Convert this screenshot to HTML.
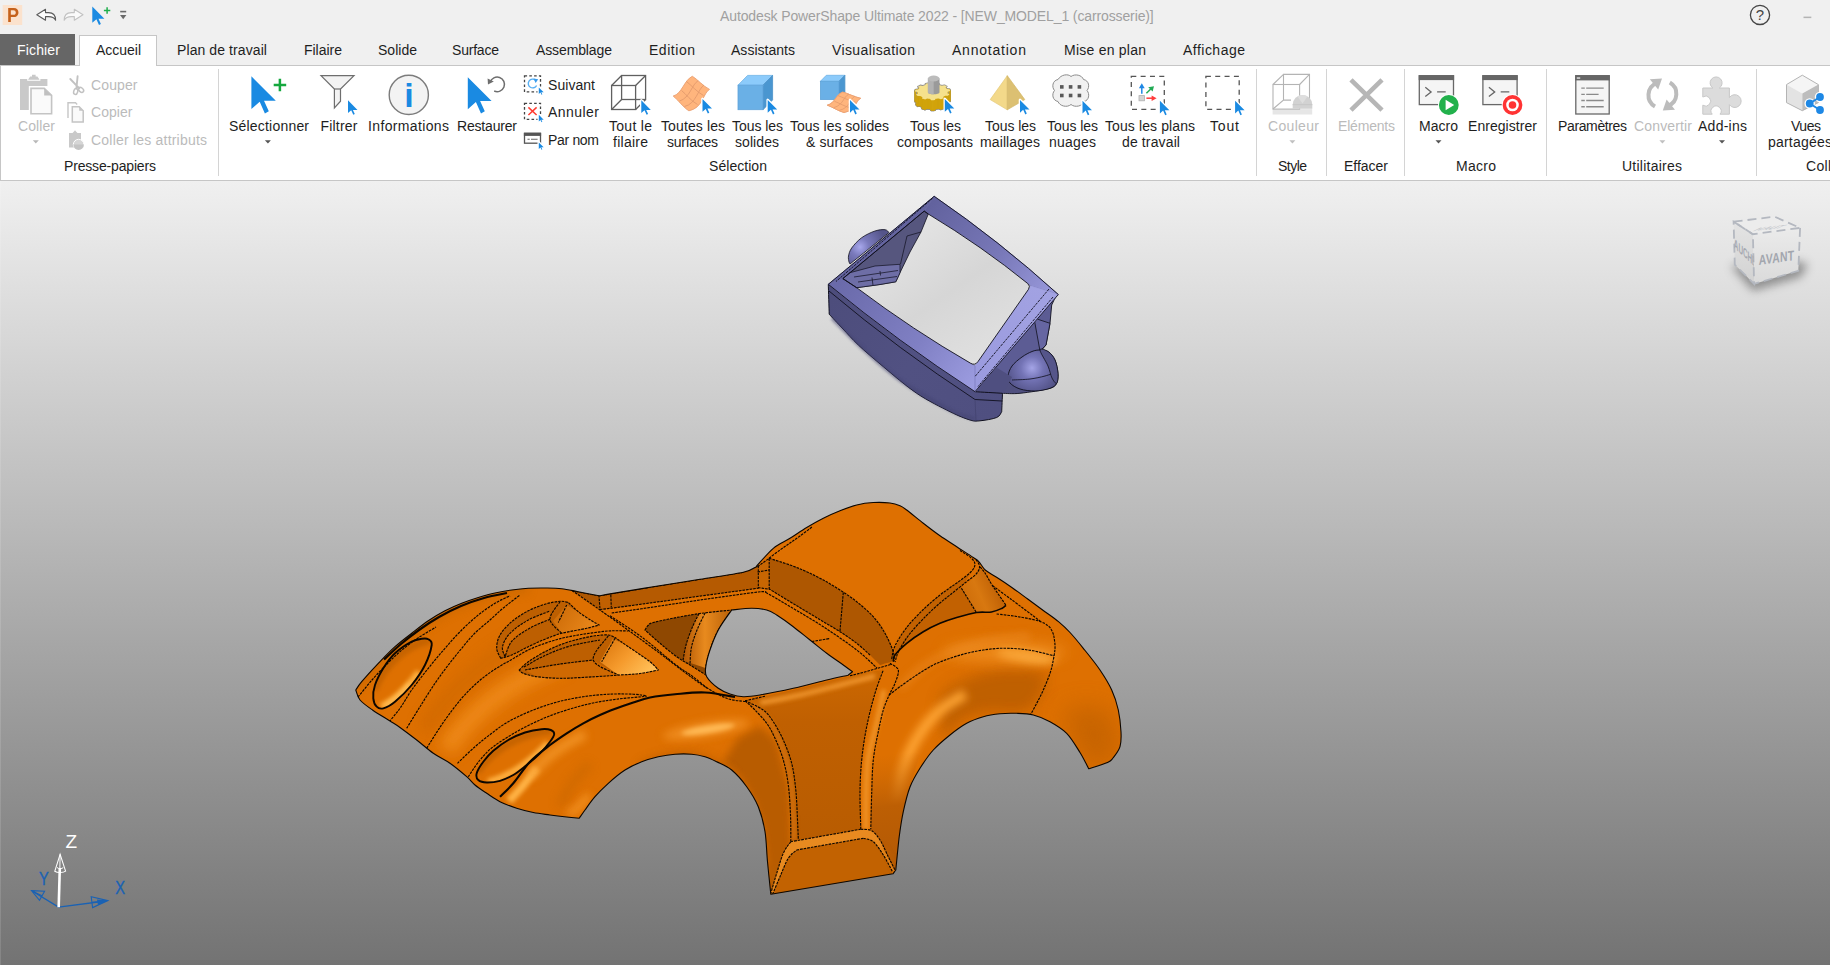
<!DOCTYPE html>
<html lang="fr"><head><meta charset="utf-8"><title>Autodesk PowerShape Ultimate 2022</title>
<style>
html,body{margin:0;padding:0;background:#f0f0f0;}
body{width:1830px;height:965px;overflow:hidden;font-family:"Liberation Sans",sans-serif;font-size:14px;}
#app{position:relative;width:1830px;height:965px;overflow:hidden;background:#f0f0f0;}
#ribbon{position:absolute;left:0;top:65px;width:1840px;height:116px;background:#fff;border:1px solid #c6c6c6;box-sizing:border-box;border-right:none;}
#tabfile{position:absolute;left:0;top:34px;width:75px;height:31px;background:#666;}
#tabhome{position:absolute;left:79px;top:35px;width:78px;height:31px;background:#fff;border:1px solid #c6c6c6;border-bottom:none;box-sizing:border-box;}
.sep{position:absolute;top:69px;width:1px;height:107px;background:#d4d4d4;}
.l{position:absolute;white-space:pre;line-height:16px;height:16px;}
.d{color:#1e1e1e;}
.g{color:#bbbbbb;}
.t{color:#a0a0a0;}
.w{color:#fff;}
#icons{position:absolute;left:0;top:0;}
#view{position:absolute;left:0;top:181px;}
#logo{position:absolute;left:5.6px;top:3.2px;width:14px;height:24px;line-height:24px;font-size:21px;font-weight:bold;color:#c5611b;text-align:center;transform:scaleX(0.86);transform-origin:50% 50%;z-index:3;}
#help{position:absolute;left:1752px;top:6px;width:16px;height:18px;line-height:18px;font-size:15px;color:#444;text-align:center;z-index:3;}
</style></head>
<body>
<div id="app">
<div id="ribbon"></div>
<div id="tabfile"></div>
<div id="tabhome"></div>
<div class="sep" style="left:218px"></div>
<div class="sep" style="left:1256px"></div>
<div class="sep" style="left:1326px"></div>
<div class="sep" style="left:1404px"></div>
<div class="sep" style="left:1546px"></div>
<div class="sep" style="left:1756px"></div>
<span id="logo">P</span>
<span id="help">?</span>
<div id="labels">
<span class="l t" style="left:720.0px;top:8.2px;letter-spacing:-0.12px">Autodesk PowerShape Ultimate 2022 - [NEW_MODEL_1 (carrosserie)]</span>
<span class="l w" style="left:17.0px;top:42.1px;letter-spacing:0.16px">Fichier</span>
<span class="l d" style="left:96.0px;top:42.1px;letter-spacing:-0.02px">Accueil</span>
<span class="l d" style="left:177.0px;top:42.1px;letter-spacing:0.09px">Plan de travail</span>
<span class="l d" style="left:304.0px;top:42.1px;letter-spacing:-0.02px">Filaire</span>
<span class="l d" style="left:378.0px;top:42.1px;letter-spacing:0.02px">Solide</span>
<span class="l d" style="left:452.0px;top:42.1px;letter-spacing:-0.21px">Surface</span>
<span class="l d" style="left:536.0px;top:42.1px;letter-spacing:-0.12px">Assemblage</span>
<span class="l d" style="left:649.0px;top:42.1px;letter-spacing:0.53px">Edition</span>
<span class="l d" style="left:731.0px;top:42.1px;letter-spacing:0.02px">Assistants</span>
<span class="l d" style="left:832.0px;top:42.1px;letter-spacing:0.39px">Visualisation</span>
<span class="l d" style="left:952.0px;top:42.1px;letter-spacing:0.78px">Annotation</span>
<span class="l d" style="left:1064.0px;top:42.1px;letter-spacing:0.24px">Mise en plan</span>
<span class="l d" style="left:1183.0px;top:42.1px;letter-spacing:0.48px">Affichage</span>
<span class="l g" style="left:18.0px;top:117.8px;letter-spacing:0.08px">Coller</span>
<span class="l g" style="left:91.0px;top:76.8px;letter-spacing:0.12px">Couper</span>
<span class="l g" style="left:91.0px;top:104.3px;letter-spacing:0.05px">Copier</span>
<span class="l g" style="left:91.0px;top:131.8px;letter-spacing:0.21px">Coller les attributs</span>
<span class="l d" style="left:64.0px;top:158.3px;letter-spacing:-0.17px">Presse-papiers</span>
<span class="l d" style="left:229.0px;top:117.8px;letter-spacing:0.20px">Sélectionner</span>
<span class="l d" style="left:320.5px;top:117.8px;letter-spacing:0.20px">Filtrer</span>
<span class="l d" style="left:368.0px;top:117.8px;letter-spacing:0.36px">Informations</span>
<span class="l d" style="left:457.0px;top:117.8px;letter-spacing:-0.18px">Restaurer</span>
<span class="l d" style="left:548.0px;top:76.8px;letter-spacing:0.05px">Suivant</span>
<span class="l d" style="left:548.0px;top:104.3px;letter-spacing:0.46px">Annuler</span>
<span class="l d" style="left:548.0px;top:131.8px;letter-spacing:-0.32px">Par nom</span>
<span class="l d" style="left:609.0px;top:117.8px;letter-spacing:0.29px">Tout le</span>
<span class="l d" style="left:613.0px;top:133.8px;letter-spacing:0.26px">filaire</span>
<span class="l d" style="left:661.0px;top:117.8px;letter-spacing:0.11px">Toutes les</span>
<span class="l d" style="left:667.0px;top:133.8px;letter-spacing:-0.27px">surfaces</span>
<span class="l d" style="left:732.0px;top:117.8px;letter-spacing:-0.05px">Tous les</span>
<span class="l d" style="left:735.0px;top:133.8px;letter-spacing:0.07px">solides</span>
<span class="l d" style="left:790.0px;top:117.8px;letter-spacing:0.01px">Tous les solides</span>
<span class="l d" style="left:806.0px;top:133.8px;letter-spacing:0.10px">&amp; surfaces</span>
<span class="l d" style="left:910.0px;top:117.8px;letter-spacing:-0.05px">Tous les</span>
<span class="l d" style="left:897.0px;top:133.8px;letter-spacing:0.06px">composants</span>
<span class="l d" style="left:985.0px;top:117.8px;letter-spacing:-0.05px">Tous les</span>
<span class="l d" style="left:980.0px;top:133.8px;letter-spacing:0.11px">maillages</span>
<span class="l d" style="left:1047.0px;top:117.8px;letter-spacing:-0.05px">Tous les</span>
<span class="l d" style="left:1049.0px;top:133.8px;letter-spacing:0.21px">nuages</span>
<span class="l d" style="left:1105.0px;top:117.8px;letter-spacing:0.10px">Tous les plans</span>
<span class="l d" style="left:1122.0px;top:133.8px;letter-spacing:0.13px">de travail</span>
<span class="l d" style="left:1210.0px;top:117.8px;letter-spacing:0.84px">Tout</span>
<span class="l d" style="left:709.0px;top:158.3px;letter-spacing:0.05px">Sélection</span>
<span class="l g" style="left:1268.0px;top:117.8px;letter-spacing:0.33px">Couleur</span>
<span class="l d" style="left:1278.0px;top:158.3px;letter-spacing:-0.53px">Style</span>
<span class="l g" style="left:1338.0px;top:117.8px;letter-spacing:-0.19px">Eléments</span>
<span class="l d" style="left:1344.0px;top:158.3px;letter-spacing:-0.02px">Effacer</span>
<span class="l d" style="left:1419.0px;top:117.8px;letter-spacing:0.02px">Macro</span>
<span class="l d" style="left:1468.0px;top:117.8px;letter-spacing:0.05px">Enregistrer</span>
<span class="l d" style="left:1456.0px;top:158.3px;letter-spacing:0.27px">Macro</span>
<span class="l d" style="left:1558.0px;top:117.8px;letter-spacing:-0.37px">Paramètres</span>
<span class="l g" style="left:1634.0px;top:117.8px;letter-spacing:0.15px">Convertir</span>
<span class="l d" style="left:1698.0px;top:117.8px;letter-spacing:0.26px">Add-ins</span>
<span class="l d" style="left:1622.0px;top:158.3px;letter-spacing:0.24px">Utilitaires</span>
<span class="l d" style="left:1791.0px;top:117.8px;letter-spacing:-0.46px">Vues</span>
<span class="l d" style="left:1768.0px;top:133.8px;letter-spacing:0.21px">partagées</span>
<span class="l d" style="left:1806.0px;top:158.3px;letter-spacing:0.29px">Coll</span>
</div>
<svg id="icons" width="1830" height="182" viewBox="0 0 1830 182">
<rect x="2.7" y="5" width="19.5" height="20" fill="#fbe2cd"/>
<path d="M36.8 14.8L45.5 9.3V12.6H48.5C53 12.6 55.6 15.2 55.6 20.2C54.3 17.6 52.2 16.6 48.5 16.6H45.5V20.2Z" fill="#fdfdfd" stroke="#5a5a5a" stroke-width="1.1" stroke-linejoin="round"/>
<path d="M83 14.8L74.3 9.3V12.6H71.3C66.8 12.6 64.2 15.2 64.2 20.2C65.5 17.6 67.6 16.6 71.3 16.6H74.3V20.2Z" fill="#fafafa" stroke="#c2c2c2" stroke-width="1.1" stroke-linejoin="round"/>
<path d="M92.3 6.6L92.3 22.8L96.4 19.2L99 25L100.9 23.9L98.5 18.7L104.4 18.7Z" fill="#1a8ae2"/>
<path d="M103.9 10.5H110.3M107.1 7.3V13.7" stroke="#1fae4b" stroke-width="1.5" fill="none"/>
<rect x="120.2" y="10.8" width="6" height="1.6" fill="#6a6a6a"/><path d="M120 15L126.4 15L123.2 19.2Z" fill="#6a6a6a"/>
<circle cx="1760" cy="14.9" r="9.6" fill="none" stroke="#444" stroke-width="1.3"/>
<rect x="1803.5" y="16.6" width="7.8" height="1.5" fill="#b4b4b4"/>
<path d="M20 79H27.2V80.8H40.4V79H47.4V86H28.8V110H20Z" fill="#c9c9c9"/>
<path d="M28 79.8L30.2 76.6H32V74.8H35.6V76.6H37.4L39.6 79.8Z" fill="#c9c9c9"/>
<path d="M31 88.4H44.2L51.6 95.4V113.7H31Z" fill="#fafafa" stroke="#c4c4c4" stroke-width="1.6"/>
<path d="M44.2 88.4L51.6 95.4H44.2Z" fill="#c0c0c0"/>
<path d="M32.8 140.2H38.8L35.8 143.6Z" fill="#b8b8b8"/>
<g fill="none" stroke="#c2c2c2" stroke-width="1.5" stroke-linecap="round"><path d="M77.6 76.3L76.4 88.5M70.3 79L79.3 88.3" stroke-width="1.9"/><ellipse cx="75.7" cy="91.5" rx="2" ry="3" transform="rotate(15 75.7 91.5)"/><ellipse cx="81" cy="89.8" rx="2" ry="3" transform="rotate(-50 81 89.8)"/></g>
<path d="M68 118V102.8H75.5L77.2 104.5" fill="none" stroke="#c6c6c6" stroke-width="1.4"/>
<path d="M72.3 106.8H79.2L83.2 110.8V122H72.3Z" fill="#fafafa" stroke="#c4c4c4" stroke-width="1.5"/><path d="M79.2 106.8L83.2 110.8H79.2Z" fill="#c4c4c4"/>
<path d="M69 133H72.5L74 131.5L75 130.2L76 131.5L77.5 133H81V147.4H69Z" fill="#c9c9c9"/>
<circle cx="78.6" cy="144.6" r="5.3" fill="#d6d6d6" stroke="#fff" stroke-width="1"/><path d="M73.3 144.6A5.3 5.3 0 0 0 83.9 144.6Z" fill="#c4c4c4"/>
<path d="M251.4 76.3L251.4 109.1L259.7 101.7L264.9 113.5L268.8 111.3L264 100.8L275.8 100.8Z" fill="#1a8ae2"/>
<path d="M273.7 84.9H286.2M279.9 78.7V91.2" stroke="#15a83e" stroke-width="2.5" fill="none"/>
<path d="M264.9 140.2H270.9L267.9 143.6Z" fill="#555"/>
<path d="M321 75.7H354L340.5 89V101.2L334.4 108V89Z" fill="#f3f3f3" stroke="#6e6e6e" stroke-width="1.2" stroke-linejoin="miter"/><path d="M334.4 89H340.5" stroke="#6e6e6e" stroke-width="1.2"/>
<path d="M348 100.3L348 113.1L351.2 110.2L353.3 114.8L354.8 114L352.9 109.9L357.5 109.9Z" fill="#1a8ae2"/>
<circle cx="408.8" cy="94.9" r="19.6" fill="#f3f3f3" stroke="#7c7c7c" stroke-width="1.4"/>
<text x="408.9" y="107.4" font-family="'Liberation Sans',sans-serif" font-size="34" font-weight="bold" text-anchor="middle" fill="#1a8ae2">i</text>
<path d="M467.8 77.2L467.8 109.2L475.9 102L481 113.5L484.8 111.3L480.1 101.1L491.6 101.1Z" fill="#1a8ae2"/>
<path d="M490.2 82.2A7.3 7.3 0 1 1 494.2 91" fill="none" stroke="#6e6e6e" stroke-width="1.5"/><path d="M487.6 78.5L493.8 81.6L488 84.6Z" fill="#6e6e6e"/>
<rect x="524.5" y="75.9" width="16" height="16" fill="none" stroke="#444" stroke-width="1.3" stroke-dasharray="2.6 2.2"/>
<path d="M535.6 80.2A4.4 4.4 0 1 0 536.6 85.5" fill="none" stroke="#58b0f4" stroke-width="1.4"/><path d="M533.5 78.6L538.2 79.2L535.6 83Z" fill="#3a9cec"/>
<path d="M538.8 87.4L538.8 94L540.5 92.5L541.5 94.8L542.3 94.4L541.3 92.3L543.7 92.3Z" fill="#fff" stroke="#fff" stroke-width="2.6" stroke-linejoin="round"/><path d="M538.8 87.4L538.8 94L540.5 92.5L541.5 94.8L542.3 94.4L541.3 92.3L543.7 92.3Z" fill="#1a8ae2"/>
<rect x="524.5" y="103.3" width="16" height="16" fill="none" stroke="#444" stroke-width="1.3" stroke-dasharray="2.6 2.2"/>
<path d="M528.4 107.4L536.6 115M536.6 107.4L528.4 115" stroke="#ff3b30" stroke-width="1.5"/>
<path d="M538.8 114.8L538.8 121.4L540.5 119.9L541.5 122.2L542.3 121.8L541.3 119.7L543.7 119.7Z" fill="#fff" stroke="#fff" stroke-width="2.6" stroke-linejoin="round"/><path d="M538.8 114.8L538.8 121.4L540.5 119.9L541.5 122.2L542.3 121.8L541.3 119.7L543.7 119.7Z" fill="#1a8ae2"/>
<rect x="524.5" y="133.4" width="16" height="9.8" fill="#fff" stroke="#555" stroke-width="1.3"/><rect x="523.9" y="132.7" width="17.2" height="3.2" fill="#555"/><path d="M527.5 139.3H529.7M531 139.3H537.6" stroke="#666" stroke-width="1.1"/>
<path d="M538.8 142.4L538.8 149L540.5 147.5L541.5 149.8L542.3 149.4L541.3 147.3L543.7 147.3Z" fill="#fff" stroke="#fff" stroke-width="2.6" stroke-linejoin="round"/><path d="M538.8 142.4L538.8 149L540.5 147.5L541.5 149.8L542.3 149.4L541.3 147.3L543.7 147.3Z" fill="#1a8ae2"/>
<g fill="none" stroke="#606060" stroke-width="1.3"><rect x="611.6" y="85.5" width="24" height="24"/><rect x="621.6" y="75.5" width="24" height="24"/><path d="M611.6 85.5L621.6 75.5M635.6 85.5L645.6 75.5M611.6 109.5L621.6 99.5M635.6 109.5L645.6 99.5"/></g>
<path d="M641.3 100.3L641.3 113.1L644.5 110.2L646.6 114.8L648.1 114L646.2 109.9L650.8 109.9Z" fill="#fff" stroke="#fff" stroke-width="2.6" stroke-linejoin="round"/><path d="M641.3 100.3L641.3 113.1L644.5 110.2L646.6 114.8L648.1 114L646.2 109.9L650.8 109.9Z" fill="#1a8ae2"/>
<path d="M692.4 76.3 C697 79 703 86 709.5 89.4 L709.5 89.4 C703 93 703 108 688.9 110.8 L688.9 110.8 C684 108 678 100 673.2 96 L673.2 96 C682 94 684 80 692.4 76.3 Z" fill="#ffb57d" stroke="#e9a074" stroke-width="0.9"/><path d="M686.5 81.5 C691 85 697 92 703.5 95.5 M681.5 90.5 C686 94 691 101 697.5 104.5 M698.2 80.7 C692 84 690 98 679.5 101 M704 85 C698 89 696 104 684.5 106.5" fill="none" stroke="#e39a6c" stroke-width="0.9"/>
<path d="M702.5 99L702.5 111.8L705.7 108.9L707.8 113.5L709.3 112.7L707.4 108.6L712 108.6Z" fill="#fff" stroke="#fff" stroke-width="2.6" stroke-linejoin="round"/><path d="M702.5 99L702.5 111.8L705.7 108.9L707.8 113.5L709.3 112.7L707.4 108.6L712 108.6Z" fill="#1a8ae2"/>
<path d="M738 85.2L747.6 75.4L772.6 75.4L763 85.2Z" fill="#8ccbfb" stroke="#6fb2e6" stroke-width="0.8"/><path d="M763 85.2L772.6 75.4L772.6 99.9L763 109.7Z" fill="#4a96d0" stroke="#4a90c8" stroke-width="0.8"/><rect x="738" y="85.2" width="25" height="24.5" fill="#6ab0e6" stroke="#5fa4da" stroke-width="0.8"/>
<path d="M767.7 99.9L767.7 112.7L770.9 109.8L773 114.4L774.5 113.6L772.6 109.5L777.2 109.5Z" fill="#fff" stroke="#fff" stroke-width="2.6" stroke-linejoin="round"/><path d="M767.7 99.9L767.7 112.7L770.9 109.8L773 114.4L774.5 113.6L772.6 109.5L777.2 109.5Z" fill="#1a8ae2"/>
<path d="M820.4 81.3L826.3 75.3L844.9 75.3L839 81.3Z" fill="#8ccbfb" stroke="#6fb2e6" stroke-width="0.8"/><path d="M839 81.3L844.9 75.3L844.9 93.5L839 99.5Z" fill="#4a96d0" stroke="#4a90c8" stroke-width="0.8"/><rect x="820.4" y="81.3" width="18.6" height="18.2" fill="#6ab0e6" stroke="#5fa4da" stroke-width="0.8"/>
<g transform="translate(824.5 93.5) scale(1 0.62) rotate(-8)"><g stroke="#fff" stroke-width="3"><path d="M18.4 0.3 C22.8 2.8 28.5 9.5 34.7 12.7 L34.7 12.7 C28.5 16.1 28.5 30.4 15.1 33.1 L15.1 33.1 C10.4 30.4 4.8 22.8 0.2 19 L0.2 19 C8.5 17.1 10.4 3.8 18.4 0.3 Z" fill="#ffb57d" stroke="#e9a074" stroke-width="0.9"/><path d="M12.8 5.2 C17.1 8.5 22.8 15.2 29 18.5 M8.1 13.8 C12.3 17.1 17.1 23.8 23.3 27.1 M23.9 4.5 C18.1 7.6 16.1 20.9 6.2 23.8 M29.4 8.5 C23.8 12.3 21.8 26.6 10.9 29" fill="none" stroke="#e39a6c" stroke-width="0.9"/></g><path d="M18.4 0.3 C22.8 2.8 28.5 9.5 34.7 12.7 L34.7 12.7 C28.5 16.1 28.5 30.4 15.1 33.1 L15.1 33.1 C10.4 30.4 4.8 22.8 0.2 19 L0.2 19 C8.5 17.1 10.4 3.8 18.4 0.3 Z" fill="#ffb57d" stroke="#e9a074" stroke-width="0.9"/><path d="M12.8 5.2 C17.1 8.5 22.8 15.2 29 18.5 M8.1 13.8 C12.3 17.1 17.1 23.8 23.3 27.1 M23.9 4.5 C18.1 7.6 16.1 20.9 6.2 23.8 M29.4 8.5 C23.8 12.3 21.8 26.6 10.9 29" fill="none" stroke="#e39a6c" stroke-width="0.9"/></g>
<path d="M850 99.9L850 112.7L853.2 109.8L855.3 114.4L856.8 113.6L854.9 109.5L859.5 109.5Z" fill="#fff" stroke="#fff" stroke-width="2.6" stroke-linejoin="round"/><path d="M850 99.9L850 112.7L853.2 109.8L855.3 114.4L856.8 113.6L854.9 109.5L859.5 109.5Z" fill="#1a8ae2"/>
<path d="M949.4 104.3L949 104.9L948.5 105.5L947.9 106L945.2 105.9L944.6 106.3L943.9 106.7L943.1 107.1L943.9 108.4L942.9 108.8L941.9 109.1L940.8 109.4L938.7 108.6L937.7 108.8L936.7 108.9L935.6 109L934.9 110.3L933.6 110.4L932.3 110.4L931.1 110.4L930.2 109.1L929.2 109L928.1 108.9L927.1 108.7L925.1 109.6L923.9 109.3L922.9 109L921.9 108.6L922.5 107.3L921.7 107L921 106.6L920.4 106.1L917.7 106.3L917 105.8L916.5 105.3L916 104.7L918 103.8L917.8 103.3L917.6 102.7L917.5 102.2L915 101.7L915.1 101.1L915.2 100.5L915.5 99.9L918.1 99.6L918.5 99.1L918.9 98.6L919.4 98.2L917.9 97L918.7 96.5L919.5 96.1L920.3 95.6L922.9 96.1L923.7 95.8L924.6 95.5L925.5 95.3L925.5 93.9L926.7 93.7L927.9 93.5L929.1 93.4L930.7 94.5L931.7 94.4L932.8 94.4L933.9 94.4L935.4 93.3L936.6 93.4L937.8 93.6L939 93.8L939.1 95.1L940 95.4L941 95.6L941.8 95.9L944.3 95.4L945.2 95.8L946.1 96.3L946.8 96.7L945.4 97.9L946 98.3L946.5 98.8L946.9 99.3L949.6 99.5L949.8 100.1L950.1 100.7L950.2 101.3L947.7 101.9L947.7 102.4L947.5 103L947.3 103.5Z" fill="#8e8e8e" stroke="#8e8e8e" stroke-width="1.6" stroke-linejoin="round"/>
<path d="M949.4 94.1L949 94.7L949 104.9L949.4 104.3ZM949 94.7L948.5 95.3L948.5 105.5L949 104.9ZM948.5 95.3L947.9 95.8L947.9 106L948.5 105.5ZM947.9 95.8L945.2 95.7L945.2 105.9L947.9 106ZM945.2 95.7L944.6 96.1L944.6 106.3L945.2 105.9ZM944.6 96.1L943.9 96.5L943.9 106.7L944.6 106.3ZM943.9 96.5L943.1 96.9L943.1 107.1L943.9 106.7ZM943.1 96.9L943.9 98.2L943.9 108.4L943.1 107.1ZM943.9 98.2L942.9 98.6L942.9 108.8L943.9 108.4ZM942.9 98.6L941.9 98.9L941.9 109.1L942.9 108.8ZM941.9 98.9L940.8 99.2L940.8 109.4L941.9 109.1ZM940.8 99.2L938.7 98.4L938.7 108.6L940.8 109.4ZM938.7 98.4L937.7 98.6L937.7 108.8L938.7 108.6ZM937.7 98.6L936.7 98.7L936.7 108.9L937.7 108.8ZM936.7 98.7L935.6 98.8L935.6 109L936.7 108.9ZM935.6 98.8L934.9 100.1L934.9 110.3L935.6 109ZM934.9 100.1L933.6 100.2L933.6 110.4L934.9 110.3ZM933.6 100.2L932.3 100.2L932.3 110.4L933.6 110.4ZM932.3 100.2L931.1 100.2L931.1 110.4L932.3 110.4ZM931.1 100.2L930.2 98.9L930.2 109.1L931.1 110.4ZM930.2 98.9L929.2 98.8L929.2 109L930.2 109.1ZM929.2 98.8L928.1 98.7L928.1 108.9L929.2 109ZM928.1 98.7L927.1 98.5L927.1 108.7L928.1 108.9ZM927.1 98.5L925.1 99.4L925.1 109.6L927.1 108.7ZM925.1 99.4L923.9 99.1L923.9 109.3L925.1 109.6ZM923.9 99.1L922.9 98.8L922.9 109L923.9 109.3ZM922.9 98.8L921.9 98.4L921.9 108.6L922.9 109ZM921.9 98.4L922.5 97.1L922.5 107.3L921.9 108.6ZM922.5 97.1L921.7 96.8L921.7 107L922.5 107.3ZM921.7 96.8L921 96.4L921 106.6L921.7 107ZM921 96.4L920.4 95.9L920.4 106.1L921 106.6ZM920.4 95.9L917.7 96.1L917.7 106.3L920.4 106.1ZM917.7 96.1L917 95.6L917 105.8L917.7 106.3ZM917 95.6L916.5 95.1L916.5 105.3L917 105.8ZM916.5 95.1L916 94.5L916 104.7L916.5 105.3ZM916 94.5L918 93.6L918 103.8L916 104.7ZM918 93.6L917.8 93.1L917.8 103.3L918 103.8ZM917.8 93.1L917.6 92.5L917.6 102.7L917.8 103.3ZM917.6 92.5L917.5 92L917.5 102.2L917.6 102.7ZM917.5 92L915 91.5L915 101.7L917.5 102.2ZM915 91.5L915.1 90.9L915.1 101.1L915 101.7ZM915.1 90.9L915.2 90.3L915.2 100.5L915.1 101.1ZM915.2 90.3L915.5 89.7L915.5 99.9L915.2 100.5ZM915.5 89.7L918.1 89.4L918.1 99.6L915.5 99.9ZM918.1 89.4L918.5 88.9L918.5 99.1L918.1 99.6ZM918.5 88.9L918.9 88.4L918.9 98.6L918.5 99.1ZM918.9 88.4L919.4 88L919.4 98.2L918.9 98.6ZM945.4 87.7L946 88.1L946 98.3L945.4 97.9ZM946 88.1L946.5 88.6L946.5 98.8L946 98.3ZM946.5 88.6L946.9 89.1L946.9 99.3L946.5 98.8ZM946.9 89.1L949.6 89.3L949.6 99.5L946.9 99.3ZM949.6 89.3L949.8 89.9L949.8 100.1L949.6 99.5ZM949.8 89.9L950.1 90.5L950.1 100.7L949.8 100.1ZM950.1 90.5L950.2 91.1L950.2 101.3L950.1 100.7ZM950.2 91.1L947.7 91.7L947.7 101.9L950.2 101.3ZM947.7 91.7L947.7 92.2L947.7 102.4L947.7 101.9ZM947.7 92.2L947.5 92.8L947.5 103L947.7 102.4ZM947.5 92.8L947.3 93.3L947.3 103.5L947.5 103ZM947.3 93.3L949.4 94.1L949.4 104.3L947.3 103.5Z" fill="#8e8e8e" stroke="#8e8e8e" stroke-width="1.6" stroke-linejoin="round"/>
<path d="M949.4 94.1L949 94.7L948.5 95.3L947.9 95.8L945.2 95.7L944.6 96.1L943.9 96.5L943.1 96.9L943.9 98.2L942.9 98.6L941.9 98.9L940.8 99.2L938.7 98.4L937.7 98.6L936.7 98.7L935.6 98.8L934.9 100.1L933.6 100.2L932.3 100.2L931.1 100.2L930.2 98.9L929.2 98.8L928.1 98.7L927.1 98.5L925.1 99.4L923.9 99.1L922.9 98.8L921.9 98.4L922.5 97.1L921.7 96.8L921 96.4L920.4 95.9L917.7 96.1L917 95.6L916.5 95.1L916 94.5L918 93.6L917.8 93.1L917.6 92.5L917.5 92L915 91.5L915.1 90.9L915.2 90.3L915.5 89.7L918.1 89.4L918.5 88.9L918.9 88.4L919.4 88L917.9 86.8L918.7 86.3L919.5 85.9L920.3 85.4L922.9 85.9L923.7 85.6L924.6 85.3L925.5 85.1L925.5 83.7L926.7 83.5L927.9 83.3L929.1 83.2L930.7 84.3L931.7 84.2L932.8 84.2L933.9 84.2L935.4 83.1L936.6 83.2L937.8 83.4L939 83.6L939.1 84.9L940 85.2L941 85.4L941.8 85.7L944.3 85.2L945.2 85.6L946.1 86.1L946.8 86.5L945.4 87.7L946 88.1L946.5 88.6L946.9 89.1L949.6 89.3L949.8 89.9L950.1 90.5L950.2 91.1L947.7 91.7L947.7 92.2L947.5 92.8L947.3 93.3Z" fill="#8e8e8e" stroke="#8e8e8e" stroke-width="1.6" stroke-linejoin="round"/>
<path d="M949.4 104.3L949 104.9L948.5 105.5L947.9 106L945.2 105.9L944.6 106.3L943.9 106.7L943.1 107.1L943.9 108.4L942.9 108.8L941.9 109.1L940.8 109.4L938.7 108.6L937.7 108.8L936.7 108.9L935.6 109L934.9 110.3L933.6 110.4L932.3 110.4L931.1 110.4L930.2 109.1L929.2 109L928.1 108.9L927.1 108.7L925.1 109.6L923.9 109.3L922.9 109L921.9 108.6L922.5 107.3L921.7 107L921 106.6L920.4 106.1L917.7 106.3L917 105.8L916.5 105.3L916 104.7L918 103.8L917.8 103.3L917.6 102.7L917.5 102.2L915 101.7L915.1 101.1L915.2 100.5L915.5 99.9L918.1 99.6L918.5 99.1L918.9 98.6L919.4 98.2L917.9 97L918.7 96.5L919.5 96.1L920.3 95.6L922.9 96.1L923.7 95.8L924.6 95.5L925.5 95.3L925.5 93.9L926.7 93.7L927.9 93.5L929.1 93.4L930.7 94.5L931.7 94.4L932.8 94.4L933.9 94.4L935.4 93.3L936.6 93.4L937.8 93.6L939 93.8L939.1 95.1L940 95.4L941 95.6L941.8 95.9L944.3 95.4L945.2 95.8L946.1 96.3L946.8 96.7L945.4 97.9L946 98.3L946.5 98.8L946.9 99.3L949.6 99.5L949.8 100.1L950.1 100.7L950.2 101.3L947.7 101.9L947.7 102.4L947.5 103L947.3 103.5Z" fill="#d2a50c"/>
<path d="M949.4 94.1L949 94.7L949 104.9L949.4 104.3ZM949 94.7L948.5 95.3L948.5 105.5L949 104.9ZM948.5 95.3L947.9 95.8L947.9 106L948.5 105.5ZM947.9 95.8L945.2 95.7L945.2 105.9L947.9 106ZM945.2 95.7L944.6 96.1L944.6 106.3L945.2 105.9ZM944.6 96.1L943.9 96.5L943.9 106.7L944.6 106.3ZM943.9 96.5L943.1 96.9L943.1 107.1L943.9 106.7ZM943.1 96.9L943.9 98.2L943.9 108.4L943.1 107.1ZM943.9 98.2L942.9 98.6L942.9 108.8L943.9 108.4ZM942.9 98.6L941.9 98.9L941.9 109.1L942.9 108.8ZM941.9 98.9L940.8 99.2L940.8 109.4L941.9 109.1ZM940.8 99.2L938.7 98.4L938.7 108.6L940.8 109.4ZM938.7 98.4L937.7 98.6L937.7 108.8L938.7 108.6ZM937.7 98.6L936.7 98.7L936.7 108.9L937.7 108.8ZM936.7 98.7L935.6 98.8L935.6 109L936.7 108.9ZM935.6 98.8L934.9 100.1L934.9 110.3L935.6 109ZM934.9 100.1L933.6 100.2L933.6 110.4L934.9 110.3ZM933.6 100.2L932.3 100.2L932.3 110.4L933.6 110.4ZM932.3 100.2L931.1 100.2L931.1 110.4L932.3 110.4ZM931.1 100.2L930.2 98.9L930.2 109.1L931.1 110.4ZM930.2 98.9L929.2 98.8L929.2 109L930.2 109.1ZM929.2 98.8L928.1 98.7L928.1 108.9L929.2 109ZM928.1 98.7L927.1 98.5L927.1 108.7L928.1 108.9ZM927.1 98.5L925.1 99.4L925.1 109.6L927.1 108.7ZM925.1 99.4L923.9 99.1L923.9 109.3L925.1 109.6ZM923.9 99.1L922.9 98.8L922.9 109L923.9 109.3ZM922.9 98.8L921.9 98.4L921.9 108.6L922.9 109ZM921.9 98.4L922.5 97.1L922.5 107.3L921.9 108.6ZM922.5 97.1L921.7 96.8L921.7 107L922.5 107.3ZM921.7 96.8L921 96.4L921 106.6L921.7 107ZM921 96.4L920.4 95.9L920.4 106.1L921 106.6ZM920.4 95.9L917.7 96.1L917.7 106.3L920.4 106.1ZM917.7 96.1L917 95.6L917 105.8L917.7 106.3ZM917 95.6L916.5 95.1L916.5 105.3L917 105.8ZM916.5 95.1L916 94.5L916 104.7L916.5 105.3ZM916 94.5L918 93.6L918 103.8L916 104.7ZM918 93.6L917.8 93.1L917.8 103.3L918 103.8ZM917.8 93.1L917.6 92.5L917.6 102.7L917.8 103.3ZM917.6 92.5L917.5 92L917.5 102.2L917.6 102.7ZM917.5 92L915 91.5L915 101.7L917.5 102.2ZM915 91.5L915.1 90.9L915.1 101.1L915 101.7ZM915.1 90.9L915.2 90.3L915.2 100.5L915.1 101.1ZM915.2 90.3L915.5 89.7L915.5 99.9L915.2 100.5ZM915.5 89.7L918.1 89.4L918.1 99.6L915.5 99.9ZM918.1 89.4L918.5 88.9L918.5 99.1L918.1 99.6ZM918.5 88.9L918.9 88.4L918.9 98.6L918.5 99.1ZM918.9 88.4L919.4 88L919.4 98.2L918.9 98.6ZM945.4 87.7L946 88.1L946 98.3L945.4 97.9ZM946 88.1L946.5 88.6L946.5 98.8L946 98.3ZM946.5 88.6L946.9 89.1L946.9 99.3L946.5 98.8ZM946.9 89.1L949.6 89.3L949.6 99.5L946.9 99.3ZM949.6 89.3L949.8 89.9L949.8 100.1L949.6 99.5ZM949.8 89.9L950.1 90.5L950.1 100.7L949.8 100.1ZM950.1 90.5L950.2 91.1L950.2 101.3L950.1 100.7ZM950.2 91.1L947.7 91.7L947.7 101.9L950.2 101.3ZM947.7 91.7L947.7 92.2L947.7 102.4L947.7 101.9ZM947.7 92.2L947.5 92.8L947.5 103L947.7 102.4ZM947.5 92.8L947.3 93.3L947.3 103.5L947.5 103ZM947.3 93.3L949.4 94.1L949.4 104.3L947.3 103.5Z" fill="#d2a50c" stroke="#d2a50c" stroke-width="0.4"/>
<path d="M949.4 94.1L949 94.7L948.5 95.3L947.9 95.8L945.2 95.7L944.6 96.1L943.9 96.5L943.1 96.9L943.9 98.2L942.9 98.6L941.9 98.9L940.8 99.2L938.7 98.4L937.7 98.6L936.7 98.7L935.6 98.8L934.9 100.1L933.6 100.2L932.3 100.2L931.1 100.2L930.2 98.9L929.2 98.8L928.1 98.7L927.1 98.5L925.1 99.4L923.9 99.1L922.9 98.8L921.9 98.4L922.5 97.1L921.7 96.8L921 96.4L920.4 95.9L917.7 96.1L917 95.6L916.5 95.1L916 94.5L918 93.6L917.8 93.1L917.6 92.5L917.5 92L915 91.5L915.1 90.9L915.2 90.3L915.5 89.7L918.1 89.4L918.5 88.9L918.9 88.4L919.4 88L917.9 86.8L918.7 86.3L919.5 85.9L920.3 85.4L922.9 85.9L923.7 85.6L924.6 85.3L925.5 85.1L925.5 83.7L926.7 83.5L927.9 83.3L929.1 83.2L930.7 84.3L931.7 84.2L932.8 84.2L933.9 84.2L935.4 83.1L936.6 83.2L937.8 83.4L939 83.6L939.1 84.9L940 85.2L941 85.4L941.8 85.7L944.3 85.2L945.2 85.6L946.1 86.1L946.8 86.5L945.4 87.7L946 88.1L946.5 88.6L946.9 89.1L949.6 89.3L949.8 89.9L950.1 90.5L950.2 91.1L947.7 91.7L947.7 92.2L947.5 92.8L947.3 93.3Z" fill="#f5e18c"/>
<path d="M927.9 78.5V92.3C927.9 95 939.5 95 939.5 92.3V78.5Z" fill="#9a9a9a"/><path d="M927.9 78.5V92.3C927.9 93.8 931 94.4 933.7 94.4V78.5Z" fill="#b2b2b2"/><ellipse cx="933.7" cy="78.5" rx="5.8" ry="2.9" fill="#bcbcbc"/>
<path d="M944.8 99L944.8 111.8L948 108.9L950.1 113.5L951.6 112.7L949.7 108.6L954.3 108.6Z" fill="#fff" stroke="#fff" stroke-width="2.6" stroke-linejoin="round"/><path d="M944.8 99L944.8 111.8L948 108.9L950.1 113.5L951.6 112.7L949.7 108.6L954.3 108.6Z" fill="#1a8ae2"/>
<path d="M1007.3 75.7L990.2 99.6L1007.3 109.8Z" fill="#f3d98a" stroke="#e4c878" stroke-width="0.7"/><path d="M1007.3 75.7L1024.8 99.6L1007.3 109.8Z" fill="#dcc072" stroke="#d4b868" stroke-width="0.7"/>
<path d="M1020 99.9L1020 112.7L1023.2 109.8L1025.3 114.4L1026.8 113.6L1024.9 109.5L1029.5 109.5Z" fill="#fff" stroke="#fff" stroke-width="2.6" stroke-linejoin="round"/><path d="M1020 99.9L1020 112.7L1023.2 109.8L1025.3 114.4L1026.8 113.6L1024.9 109.5L1029.5 109.5Z" fill="#1a8ae2"/>
<path d="M1058 79.5C1061 74.5 1068 73.5 1071 76.5C1075 73.5 1082 75 1083.5 79.5C1089 80.5 1090 87 1087 90.5C1090 94 1089 100.5 1084 101.5C1083 106 1075 108 1071 104.5C1067 108 1059.5 106 1058 101.5C1052.5 100.5 1051.5 94 1054.5 90.5C1051.5 87 1052.5 80.5 1058 79.5Z" fill="#f1f1f1" stroke="#8c8c8c" stroke-width="1"/>
<rect x="1060" y="85.1" width="3.6" height="3.6" fill="#595959"/>
<rect x="1060" y="93.7" width="3.6" height="3.6" fill="#595959"/>
<rect x="1068.8" y="85.1" width="3.6" height="3.6" fill="#595959"/>
<rect x="1068.8" y="93.7" width="3.6" height="3.6" fill="#595959"/>
<rect x="1077.6" y="85.1" width="3.6" height="3.6" fill="#595959"/>
<rect x="1077.6" y="93.7" width="3.6" height="3.6" fill="#595959"/>
<path d="M1082.5 100.7L1082.5 113.5L1085.7 110.6L1087.8 115.2L1089.3 114.4L1087.4 110.3L1092 110.3Z" fill="#fff" stroke="#fff" stroke-width="2.6" stroke-linejoin="round"/><path d="M1082.5 100.7L1082.5 113.5L1085.7 110.6L1087.8 115.2L1089.3 114.4L1087.4 110.3L1092 110.3Z" fill="#1a8ae2"/>
<rect x="1131.3" y="76.3" width="33" height="33" fill="none" stroke="#555" stroke-width="1.3" stroke-dasharray="5 4.33"/>
<rect x="1139" y="95.6" width="5.4" height="5.2" fill="#d4d4d4" stroke="#b0b0b0" stroke-width="0.8"/>
<path d="M1141.8 93.8V87" stroke="#1e88e5" stroke-width="1.5"/><path d="M1138.9 88.2L1141.8 83.3L1144.7 88.2Z" fill="#1e88e5"/>
<path d="M1146.4 93.2L1151 88.8" stroke="#22aa55" stroke-width="1.5"/><path d="M1148.2 87.2L1154 86.2L1152.6 91.6Z" fill="#22aa55"/>
<path d="M1146.4 98.2H1152.5" stroke="#ff3b3b" stroke-width="1.5"/><path d="M1151.6 95.4L1156.6 98.2L1151.6 101Z" fill="#ff3b3b"/>
<path d="M1159.9 100.7L1159.9 113.5L1163.1 110.6L1165.2 115.2L1166.7 114.4L1164.8 110.3L1169.4 110.3Z" fill="#fff" stroke="#fff" stroke-width="2.6" stroke-linejoin="round"/><path d="M1159.9 100.7L1159.9 113.5L1163.1 110.6L1165.2 115.2L1166.7 114.4L1164.8 110.3L1169.4 110.3Z" fill="#1a8ae2"/>
<rect x="1205.9" y="76.3" width="33.3" height="33" fill="none" stroke="#555" stroke-width="1.3" stroke-dasharray="5 4.33"/>
<path d="M1235.1 100.7L1235.1 113.5L1238.3 110.6L1240.4 115.2L1241.9 114.4L1240 110.3L1244.6 110.3Z" fill="#fff" stroke="#fff" stroke-width="2.6" stroke-linejoin="round"/><path d="M1235.1 100.7L1235.1 113.5L1238.3 110.6L1240.4 115.2L1241.9 114.4L1240 110.3L1244.6 110.3Z" fill="#1a8ae2"/>
<rect x="1272.6" y="109.1" width="39.6" height="5.4" fill="#e6e6e6"/>
<g fill="none" stroke="#b4b4b4" stroke-width="1.1"><rect x="1273" y="84.5" width="26.6" height="24.6"/><path d="M1283.5 100.1V74.4H1309.5V100.1M1273 84.5L1283.5 74.4M1299.6 84.5L1309.5 74.4M1273 109L1283.5 100.1H1291"/></g>
<path d="M1292.7 108.8V104.7A9.8 9.8 0 0 1 1312.3 104.7V108.8Z" fill="#d2d2d2"/><path d="M1297.5 96.5L1302.5 103.5L1307.5 96.5A9.8 9.8 0 0 0 1297.5 96.5Z" fill="#dedede"/><rect x="1292.7" y="104" width="19.6" height="1.2" fill="#c8c8c8"/>
<path d="M1289.4 140.2H1295.4L1292.4 143.6Z" fill="#c0c0c0"/>
<path d="M1351 79.8L1382 110.2M1382 79.8L1351 110.2" stroke="#b6b6b6" stroke-width="4.6"/>
<rect x="1419.3" y="75.8" width="34.2" height="28.8" fill="#f5f5f5" stroke="#686868" stroke-width="1.3"/><rect x="1418.7" y="75.1" width="35.4" height="5" fill="#666"/><path d="M1425.3 87.2L1431.1 91.9L1425.3 96.6M1437.1 91.9H1445.7" fill="none" stroke="#666" stroke-width="1.3"/>
<circle cx="1448.8" cy="105" r="10.8" fill="#fff"/><circle cx="1448.8" cy="105" r="9.9" fill="#22b14c"/><path d="M1445.6 99.8L1454.2 105L1445.6 110.2Z" fill="#fff"/>
<path d="M1435.5 140.2H1441.5L1438.5 143.6Z" fill="#555"/>
<rect x="1482.9" y="75.8" width="34.2" height="28.8" fill="#f5f5f5" stroke="#686868" stroke-width="1.3"/><rect x="1482.3" y="75.1" width="35.4" height="5" fill="#666"/><path d="M1488.9 87.2L1494.7 91.9L1488.9 96.6M1500.7 91.9H1509.3" fill="none" stroke="#666" stroke-width="1.3"/>
<circle cx="1512.5" cy="105" r="10.8" fill="#fff"/><circle cx="1512.5" cy="105" r="9.9" fill="#ff3333"/><circle cx="1512.5" cy="105" r="6.3" fill="#fff"/><circle cx="1512.5" cy="105" r="3.8" fill="#ff3333"/>
<rect x="1575.8" y="75.8" width="33.4" height="38.2" fill="#f5f5f5" stroke="#686868" stroke-width="1.3"/><rect x="1575.2" y="75.1" width="34.6" height="5.3" fill="#666"/><rect x="1576.8" y="77.3" width="3.4" height="1.5" fill="#ddd"/>
<path d="M1581.3 88.1H1584.8M1586.2 88.1H1603.7" stroke="#8a8a8a" stroke-width="1.4"/>
<path d="M1581.3 94.4H1584.8M1586.2 94.4H1598.6" stroke="#8a8a8a" stroke-width="1.4"/>
<path d="M1581.3 100.5H1584.8M1586.2 100.5H1603.7" stroke="#8a8a8a" stroke-width="1.4"/>
<path d="M1581.3 106.8H1584.8M1586.2 106.8H1603.7" stroke="#8a8a8a" stroke-width="1.4"/>
<g fill="none" stroke="#bcbcbc" stroke-width="4"><path d="M1655 106.5A13 13 0 0 1 1656.5 83.2"/><path d="M1669.8 82.5A13 13 0 0 1 1668.3 105.8"/></g>
<path d="M1649.8 79.2L1662 78.6L1658.2 89.5Z" fill="#bcbcbc"/><path d="M1675 109.8L1662.8 110.4L1666.6 99.5Z" fill="#bcbcbc"/>
<path d="M1659.4 140.2H1665.4L1662.4 143.6Z" fill="#c0c0c0"/>
<path d="M1702.8 88H1712.9A6 6 0 1 1 1719.3 88H1729.4V97.6A6.4 6.4 0 1 1 1729.4 104.6V114.2H1720A5 5 0 1 0 1712.2 114.2H1702.8V105.2A5 5 0 1 0 1702.8 97Z" fill="#dcdcdc" stroke="#c8c8c8" stroke-width="1"/>
<path d="M1719 140.2H1725L1722 143.6Z" fill="#555"/>
<path d="M1802.3 75.2L1818.4 84.6L1802.3 93.6L1786.5 84.6Z" fill="#f5f5f5"/><path d="M1786.5 84.6L1802.3 93.6V110.7L1786.5 102.6Z" fill="#e3e3e3"/><path d="M1818.4 84.6L1802.3 93.6V110.7L1818.4 102.6Z" fill="#bdbdbd"/><path d="M1802.3 75.2L1818.4 84.6V102.6L1802.3 110.7L1786.5 102.6V84.6Z" fill="none" stroke="#b4b4b4" stroke-width="1"/>
<g stroke="#fff" stroke-width="2.5" fill="#fff"><circle cx="1820" cy="97" r="4"/><circle cx="1809.7" cy="103.5" r="4"/><circle cx="1820" cy="110" r="4"/></g>
<path d="M1820 97L1809.7 103.5L1820 110" fill="none" stroke="#1e88e5" stroke-width="2"/><circle cx="1820" cy="97" r="3.9" fill="#1e88e5"/><circle cx="1809.7" cy="103.5" r="3.9" fill="#1e88e5"/><circle cx="1820" cy="110" r="3.9" fill="#1e88e5"/>
</svg>
<svg id="view" width="1830" height="784" viewBox="0 181 1830 784">
<defs>
<linearGradient id="bg" x1="0" y1="0" x2="0" y2="1">
<stop offset="0" stop-color="#f0f0f0"/>
<stop offset="1" stop-color="#737373"/>
</linearGradient>
</defs>
<rect x="0" y="181" width="1830" height="784" fill="url(#bg)"/>
<defs>
<clipPath id="carclip"><path clip-rule="evenodd" d="M355.8 690C356.8 688.6 357.9 686.2 361.7 681.7C365.4 677.2 372.8 669.1 378.3 663.3C383.9 657.5 389.4 651.7 395 646.7C400.6 641.7 406.1 637.6 411.7 633.3C417.2 629 422.8 624.5 428.3 620.8C433.9 617 439.4 613.7 445 610.8C450.6 607.9 456.1 605.5 461.7 603.3C467.2 601.1 472.8 599.2 478.3 597.5C483.9 595.8 489.4 594.2 495 593C500.6 591.8 506.1 590.8 511.7 590C517.2 589.2 522.8 588.6 528.3 588.3C533.8 588 539.4 587.9 545 588C550.6 588.1 556.2 588.1 561.7 588.7C567.2 589.3 572.8 590.7 578.3 591.7C583.8 592.8 591.4 594.3 595 595C598.6 595.7 599.2 595.7 600 595.8L600 595.8C602 595.4 603.4 595 611.7 593.6C620 592.2 635.3 589.7 650 587.3C664.7 584.9 684.5 581.8 700 579.3C715.5 576.8 733.8 574.3 743.3 572.2C752.8 570.1 754.5 567.5 756.7 566.5L756.7 566C759.5 563 767.8 552.9 773.3 548.3C778.8 543.7 784.4 541.8 790 538.3C795.6 534.8 801.2 530.8 806.7 527.5C812.2 524.2 817.8 521.1 823.3 518.3C828.8 515.5 834.4 513 840 510.8C845.6 508.6 851.2 506.4 856.7 505C862.2 503.6 867.8 502.8 873.3 502.5C878.8 502.2 885.5 502.4 890 503C894.5 503.6 897.2 504.6 900 505.8C902.8 507 902.8 507.1 906.7 510C910.6 512.9 917.8 519 923.3 523.3C928.8 527.6 934.4 531.9 940 535.8C945.6 539.7 951.2 543.1 956.7 546.7C962.2 550.3 969.6 555 973.3 557.5C977 560 977 559.7 979 561.8C981 563.9 982.3 567.4 985.2 570C988.1 572.6 992.1 574.3 996.6 577.3C1001.1 580.2 1007 584.1 1012.2 587.7C1017.4 591.3 1022.5 595.2 1027.7 599C1032.9 602.8 1038.1 606.7 1043.3 610.5C1048.5 614.3 1054.3 618.2 1058.8 621.9C1063.2 625.6 1065.9 628.1 1070 632.5C1074.1 636.9 1078.3 642 1083.3 648.3C1088.3 654.5 1095.3 663 1100 670C1104.7 677 1108.7 683.3 1111.7 690C1114.8 696.7 1116.8 703 1118.3 710C1119.8 717 1120.7 725.6 1121 731.7C1121.3 737.8 1121.3 742.3 1120 746.7C1118.7 751.1 1115.1 755.4 1113 758C1110.9 760.6 1111.5 760.7 1107.5 762.5C1103.5 764.3 1091.8 767.7 1088.7 768.7L1088.7 768.7C1087.2 766 1083.7 758.4 1080 752.5C1076.3 746.6 1071.7 738.4 1066.7 733.3C1061.7 728.2 1055.6 724.8 1050 721.7C1044.4 718.7 1038.8 716.4 1033.3 715C1027.8 713.6 1022.2 713.5 1016.7 713.3C1011.2 713.1 1005.6 713.1 1000 713.7C994.4 714.3 988.8 715.1 983.3 716.7C977.8 718.3 972.2 720.2 966.7 723.3C961.2 726.3 955.6 730.5 950 735C944.4 739.5 938.3 744.5 933.3 750C928.3 755.5 923.9 762.1 920 768.3C916.1 774.5 912.8 779.8 910 787C907.2 794.2 905.1 803.4 903.3 811.7C901.5 820 900.5 827 899.2 836.7C898 846.4 896.4 864.5 895.8 870L895.8 870C895.3 870.6 893.5 873.2 893 873.8L893 873.8C872.6 877.2 791.2 890.8 770.8 894.2L770.8 894.2C770.2 888.8 768.5 872.1 767.5 861.7C766.5 851.3 766.5 840.9 765 831.7C763.5 822.5 761.3 814.2 758.3 806.7C755.2 799.2 751.1 792.8 746.7 786.7C742.3 780.6 736.7 774.2 731.7 770C726.7 765.8 721.2 763.9 716.7 761.7C712.2 759.5 709.2 758 705 756.7C700.8 755.5 696.7 754.6 691.7 754.2C686.7 753.8 680.6 753.8 675 754.2C669.4 754.6 663.8 755.5 658.3 756.7C652.8 758 647.2 759.5 641.7 761.7C636.2 763.9 630.6 766.4 625 770C619.4 773.6 613.3 778.8 608.3 783.3C603.3 787.8 598.9 792.2 595 796.7C591.1 801.2 587.6 806.4 585 810C582.4 813.6 580.2 816.9 579.2 818.3L579.2 818.3C577.1 818.1 571.6 817.5 566.7 817C561.8 816.5 555.6 815.8 550 815C544.4 814.2 538.8 813.6 533.3 812.5C527.8 811.4 522.2 810.1 516.7 808.3C511.2 806.5 505 804.2 500 801.7C495 799.2 490.9 796.1 486.7 793.3C482.5 790.5 478.3 787.8 475 785C471.7 782.2 470.9 780.3 466.7 776.7C462.5 773.1 455.6 767.2 450 763.3C444.4 759.4 438.9 757.2 433.3 753.3C427.8 749.4 422.2 744.3 416.7 740C411.1 735.7 404.4 730.7 400 727.5C395.6 724.3 394.6 723.9 390 721C385.4 718.1 377.5 713.5 372.5 710C367.5 706.5 362.8 703.3 360 700C357.2 696.7 356.5 691.7 355.8 690Z M731.7 610C729.5 613.3 721.9 623.3 718.3 630C714.7 636.7 712.1 643.9 710 650C707.9 656.1 706.3 662.2 705.8 666.7C705.2 671.2 704.6 673.1 706.7 676.7C708.8 680.3 714.4 685.4 718.3 688.3C722.2 691.2 725.8 692.6 730 694C734.2 695.4 738.3 696.5 743.3 696.7C748.3 696.9 751.7 696.4 760 695C768.3 693.6 782.2 690.8 793.3 688.3C804.4 685.8 817.6 682.2 826.7 680C835.8 677.8 844.5 676.1 848 675.3L852.5 671.7C851 670.6 847.6 668.1 843.3 665C839 661.9 832.2 657.5 826.7 653.3C821.2 649.1 815.6 644.4 810 640C804.4 635.6 798.8 630.9 793.3 626.7C787.8 622.5 781.1 617.8 776.7 615C772.3 612.2 770.9 611.1 766.7 610C762.5 608.9 757.5 608.3 751.7 608.3C745.9 608.3 735 609.7 731.7 610Z"/></clipPath>
<filter id="b4" filterUnits="userSpaceOnUse" x="320" y="470" width="840" height="460"><feGaussianBlur stdDeviation="4"/></filter>
<filter id="b7" filterUnits="userSpaceOnUse" x="320" y="470" width="840" height="460"><feGaussianBlur stdDeviation="7"/></filter>
<filter id="b12" filterUnits="userSpaceOnUse" x="320" y="470" width="840" height="460"><feGaussianBlur stdDeviation="12"/></filter>
<filter id="b2" filterUnits="userSpaceOnUse" x="320" y="470" width="840" height="460"><feGaussianBlur stdDeviation="2"/></filter>
<linearGradient id="gScoopHi" x1="0" y1="0" x2="1" y2="0.6"><stop offset="0" stop-color="#d87208"/><stop offset="0.55" stop-color="#f59a2c"/><stop offset="1" stop-color="#ffbd55"/></linearGradient>
<linearGradient id="gScoopHi2" x1="0" y1="0" x2="1" y2="0.4"><stop offset="0" stop-color="#c96805"/><stop offset="1" stop-color="#e8861a"/></linearGradient>
<linearGradient id="gPillar" x1="0" y1="0" x2="1" y2="0"><stop offset="0" stop-color="#b05604"/><stop offset="0.45" stop-color="#e88a1e"/><stop offset="1" stop-color="#b86008"/></linearGradient>
<linearGradient id="gDoor" x1="0" y1="0" x2="0" y2="1"><stop offset="0" stop-color="#cc6801"/><stop offset="0.3" stop-color="#c06001"/><stop offset="1" stop-color="#b85c01"/></linearGradient>
<linearGradient id="gRF" gradientUnits="userSpaceOnUse" x1="880" y1="755" x2="892" y2="870"><stop offset="0" stop-color="#c86605" stop-opacity="0"/><stop offset="0.45" stop-color="#bd5f04"/><stop offset="1" stop-color="#b35904"/></linearGradient>
<linearGradient id="gCP" gradientUnits="userSpaceOnUse" x1="966" y1="600" x2="1000" y2="585"><stop offset="0" stop-color="#cf6e0a"/><stop offset="0.4" stop-color="#d87810"/><stop offset="1" stop-color="#bc5e04"/></linearGradient>
</defs>
<g id="car">
<g clip-path="url(#carclip)">
<rect x="340" y="490" width="800" height="420" fill="#de7001"/>
<path d="M355.8 690C356.8 688.6 357.9 686.2 361.7 681.7C365.4 677.2 372.8 669.1 378.3 663.3C383.9 657.5 389.4 651.7 395 646.7C400.6 641.7 406.1 637.6 411.7 633.3C417.2 629 422.8 624.5 428.3 620.8C433.9 617 439.4 613.7 445 610.8C450.6 607.9 456.1 605.5 461.7 603.3C467.2 601.1 472.8 599.2 478.3 597.5C483.9 595.8 489.4 594.2 495 593C500.6 591.8 506.1 590.8 511.7 590C517.2 589.2 525.5 588.6 528.3 588.3" fill="none" stroke="#c96805" stroke-width="10" filter="url(#b4)" opacity="0.7"/>
<path d="M446 750 C470 712 510 682 565 660" fill="none" stroke="#f28f1e" stroke-width="20" filter="url(#b7)" opacity="0.75"/>
<path d="M424 730 C448 692 482 662 522 640" fill="none" stroke="#cd6802" stroke-width="14" filter="url(#b7)" opacity="0.7"/>
<path d="M738 738L760 726L776 740L790 790L794 900L760 900L766 860L762 825L752 798L738 775L722 764Z" fill="#b85c01" filter="url(#b4)"/>
<path d="M640 768C644.2 766.7 656.7 761.7 665 760C673.3 758.3 682.2 757.3 690 758C697.8 758.7 705 760.7 712 764C719 767.3 728.7 775.7 732 778" fill="none" stroke="#c46201" stroke-width="12" filter="url(#b4)" opacity="0.9"/>
<path d="M509 801C511 798.8 516.3 793.5 521 788C525.7 782.5 534.3 771.3 537 768" fill="none" stroke="#ffb244" stroke-width="8" filter="url(#b2)"/>
<path d="M530 776C532.5 773.3 539.7 764.8 545 760C550.3 755.2 555.3 751.3 562 747C568.7 742.7 581.2 736.2 585 734" fill="none" stroke="#f9a032" stroke-width="9" filter="url(#b4)" opacity="0.75"/>
<path d="M560 806C562 802.3 567 791 572 784C577 777 587 767.3 590 764" fill="none" stroke="#ce6902" stroke-width="10" filter="url(#b4)" opacity="0.7"/>
<path d="M568 814C569.8 812.8 575.5 810.2 579 807C582.5 803.8 587.3 797 589 795" fill="none" stroke="#f89a2c" stroke-width="7" filter="url(#b4)" opacity="0.85"/>
<ellipse cx="706" cy="729.5" rx="44" ry="7.5" transform="rotate(-9 706 729.5)" fill="#f5962a" filter="url(#b4)" opacity="0.75"/>
<ellipse cx="708" cy="729.3" rx="27" ry="4" transform="rotate(-9 708 729.3)" fill="#ffb852" filter="url(#b2)"/>
<path d="M940 700C942.5 690.7 950 687 960 682C970 677 986 671.3 1000 670C1014 668.7 1037.7 669 1044 674C1050.3 679 1041.7 693.7 1038 700C1034.3 706.3 1030.8 710 1022 712C1013.2 714 995.7 710.3 985 712C974.3 713.7 964.7 717.7 958 722C951.3 726.3 948 741.7 945 738C942 734.3 937.5 709.3 940 700Z" fill="#bd5f01" filter="url(#b7)" opacity="0.95"/>
<ellipse cx="1026" cy="656" rx="30" ry="6" transform="rotate(8 1026 656)" fill="#ffb64a" filter="url(#b4)"/>
<ellipse cx="1005" cy="652" rx="62" ry="11" transform="rotate(0 1005 652)" fill="#f5982a" filter="url(#b7)" opacity="0.6"/>
<path d="M900 688C905 683.7 916.7 669.5 930 662C943.3 654.5 963.3 647.3 980 643C996.7 638.7 1021.7 637.2 1030 636" fill="none" stroke="#f0902a" stroke-width="6" filter="url(#b4)" opacity="0.6"/>
<path d="M897 805C898 799.2 899.8 780.8 903 770C906.2 759.2 910.2 749.7 916 740C921.8 730.3 929.8 719.7 938 712C946.2 704.3 960.5 697 965 694" fill="none" stroke="#ffa636" stroke-width="10" filter="url(#b4)"/>
<path d="M1062 712L1085 705L1112 712L1122 750L1100 772L1082 760L1070 735Z" fill="#c06104" filter="url(#b12)" opacity="0.75"/>
<path d="M572.5 590.8L599 595.8L599.5 609L590 603Z" fill="#ae5701"/>
<path d="M599 595.8L611.7 593.6L650 587.3L700 579.3L743.3 572.2L758.3 566L758.3 588.2L700 596.1L650 603L611.7 608.2L600 609.5Z" fill="#b55a01"/>
<path d="M599 595.8L610.8 595L611.3 607.5L600 609Z" fill="#c06001"/>
<path d="M757.5 566.7L769.2 558.3L769.2 589.2L757.5 587.5Z" fill="#c86602"/>
<path d="M769.2 558.3C772.7 559.4 783.8 562.8 790 565C796.2 567.2 801.2 569.2 806.7 571.7C812.2 574.2 817.8 577 823.3 580C828.8 583 834.4 586.4 840 590C845.6 593.6 851.2 597.2 856.7 601.7C862.2 606.2 868.6 611.4 873.3 616.7C878 622 881.7 627.5 885 633.3C888.3 639.1 891.8 647.1 893.3 651.7C894.8 656.3 893.9 659.5 894 661L894 661C891.7 661.7 882.3 664.3 880 665L870 655C867.8 653 861.7 647.2 856.7 643.3C851.7 639.4 845.6 635.3 840 631.7C834.4 628.1 828.8 625 823.3 621.7C817.8 618.4 812.2 615 806.7 611.7C801.2 608.4 796.2 605.5 790 601.7C783.8 597.9 772.7 591.1 769.2 589Z" fill="#ae5701"/>
<path d="M645 630C645.5 629.2 646.6 626.8 648 625.5C649.4 624.2 648.5 623.8 653.3 622.5C658.1 621.2 668.6 619 676.7 617.5C684.8 616 692.5 614.5 701.7 613.3C710.9 612 726.7 610.5 731.7 610L731.7 610C729.5 613.3 721.9 623.3 718.3 630C714.7 636.7 712.1 643.9 710 650C707.9 656.1 706.5 662.5 705.8 666.7C705.1 670.9 706 673.6 706 675L706 675C703.3 673.3 694.9 668 690 665C685.1 662 681.7 660.3 676.7 656.7C671.7 653.1 665.3 647.8 660 643.3C654.7 638.8 647.5 632.2 645 630Z" fill="#8f4801"/>
<path d="M699 613.6C704.5 613 726.2 610.6 731.7 610L731.7 610C729.5 613.3 721.9 623.3 718.3 630C714.7 636.7 712.1 643.9 710 650C707.9 656.1 706.5 663.7 705.8 666.7C705.1 669.7 705.8 667.8 705.8 668L705.8 668C702 666.8 686.8 661.8 683 660.5L683 660.5C683.5 657.9 684.5 650.4 686 645C687.5 639.6 689.8 633.2 692 628C694.2 622.8 697.8 616 699 613.6Z" fill="url(#gPillar)"/>
<path d="M971.8 571C969.9 572.6 964 577.6 960.4 580.4C956.8 583.2 953.4 585.3 950 587.7C946.6 590.1 944.5 591.4 940 595C935.5 598.6 928.8 604.1 923.3 609.5C917.8 614.9 911.4 621.1 906.7 627.5C902 633.9 897 644.6 895 648L895 655C897 653 902 647.2 906.7 643.3C911.4 639.4 917.8 635 923.3 631.7C928.8 628.4 934.4 625.7 940 623.3C945.6 620.9 950.6 619.3 956.7 617.5C962.8 615.7 973.1 613.3 976.4 612.5L976.4 612.5C973.9 608.5 963.9 592.2 961.4 588.2Z" fill="#c26101"/>
<path d="M980 567C980.9 568 983.1 570.1 985.2 573.2C987.3 576.3 989 580.2 992.5 585.6C996 591 1003.8 602 1006 605.3L1006 605.3C1005.3 605.8 1004.2 607.3 1001.8 608.4C999.4 609.5 995.7 611.3 991.5 612C987.3 612.7 978.9 612.4 976.4 612.5L976.4 612.5C973.9 608.5 963.9 592.2 961.4 588.2L961.4 588.2C963.2 586.7 969 582.4 972 579C975 575.6 978.2 569.8 979.5 568Z" fill="url(#gCP)"/>
<path d="M745 700.8C746.7 702.3 751.4 706.2 755 710C758.6 713.8 763.4 718.6 766.7 723.3C770 728 772.2 732.2 775 738.3C777.8 744.4 781.1 752.2 783.3 760C785.5 767.8 787.1 775.8 788.3 785C789.5 794.2 790.1 805.5 790.5 815C790.9 824.5 790.8 837.2 790.8 841.7L860.8 829.2C860.7 823.2 859.9 804.8 860 793.3C860.1 781.8 860.6 771.1 861.7 760C862.8 748.9 864.5 737.8 866.7 726.7C868.9 715.6 872.2 702.8 875 693.3C877.8 683.8 881.9 673.9 883.3 670L883.3 670C880.5 670.4 875 670.8 866.7 672.5C858.4 674.2 844.4 677.4 833.3 680C822.2 682.6 811.1 685.7 800 688.3C788.9 690.9 775.9 693.7 766.7 695.8C757.5 697.9 748.6 700 745 700.8Z" fill="url(#gDoor)"/>
<path d="M760 703C766.7 701.7 786.7 698 800 695C813.3 692 827.5 688.2 840 685C852.5 681.8 869.2 677.5 875 676" fill="none" stroke="#f39a30" stroke-width="5" filter="url(#b2)" opacity="0.9"/>
<path d="M884 690C882.7 696 878.7 714.3 876 726C873.3 737.7 869.7 747.7 868 760C866.3 772.3 866.3 788.3 866 800C865.7 811.7 866 825 866 830" fill="none" stroke="#f09428" stroke-width="5" filter="url(#b2)"/>
<path d="M752 703C755 706.2 764.8 714.2 770 722C775.2 729.8 779.5 739.5 783 750C786.5 760.5 789.2 770 791 785C792.8 800 793.5 830.8 794 840" fill="none" stroke="#d87410" stroke-width="5" filter="url(#b2)" opacity="0.8"/>
<path d="M873.3 760C873 765.5 872.1 781.8 871.7 793.3C871.3 804.8 870.9 823.2 870.8 829.2L870.8 829.2C872.3 831 877.1 835.4 880 840C882.9 844.6 885.8 851.7 888.3 856.7C890.8 861.7 893.9 867.8 895 870L895.8 870C896.4 864.5 898 846.4 899.2 836.7C900.5 827 901.5 820 903.3 811.7C905.1 803.4 908.9 791.1 910 787L910 787C911.7 781.7 918.3 760.3 920 755L920 755C913 751.7 885 738.3 878 735L878 735C877.2 739.2 874.1 755.8 873.3 760Z" fill="url(#gRF)"/>
<path d="M796.7 850C795.3 851.4 791.1 853.8 788.3 858.3C785.5 862.8 782.6 870.7 780 876.7C777.4 882.7 773.8 891.3 772.5 894.2L772.5 894.2C792.4 890.9 871.8 877.5 891.7 874.2L892.5 871.7C891 868.9 886.5 860 883.3 855C880.1 850 876.6 844.5 873.3 841.7C870 838.9 865 838.9 863.3 838.3L863.3 838.3C852.2 840.2 807.8 848 796.7 850Z" fill="#c26201"/>
<path d="M790.8 841.7C802.5 839.6 849.1 831.3 860.8 829.2L860.8 829.2C862.6 829.5 868.5 829 871.7 830.8C874.9 832.6 877.2 835.7 880 840C882.8 844.3 885.8 851.7 888.3 856.7C890.8 861.7 893.9 867.8 895 870L892.5 871.7C891 868.9 886.5 860 883.3 855C880.1 850 876.6 844.5 873.3 841.7C870 838.9 865 838.9 863.3 838.3L863.3 838.3C852.2 840.2 807.8 848 796.7 850L796.7 850C795.3 851.4 791.1 853.8 788.3 858.3C785.5 862.8 782.6 870.7 780 876.7C777.4 882.7 773.8 891.3 772.5 894.2L770.8 893.3C771.8 890 774.6 880 776.7 873.3C778.8 866.6 780.9 858.6 783.3 853.3C785.6 848 789.5 843.6 790.8 841.7Z" fill="#e88a20"/>
<path d="M884 846C885 848 888.2 853.8 890 858C891.8 862.2 894.2 868.8 895 871" fill="none" stroke="#c06004" stroke-width="3" filter="url(#b2)" opacity="0.8"/>
<path d="M500.8 658.3C500.1 656.6 496.8 652.2 496.7 648.3C496.6 644.4 497.5 639.4 500 635C502.5 630.6 507 625.7 511.7 621.7C516.4 617.7 522.8 613.7 528.3 610.8C533.8 607.9 539.7 605.8 545 604.2C550.3 602.6 556.1 601.6 560 601.3C563.9 601 566.9 602.3 568.3 602.5L568.3 602.5C570 604 574.4 608.7 578.3 611.7C582.2 614.8 588.2 618.6 591.7 620.8C595.2 623 598 624.3 599.2 625L599.2 625C597.1 625.5 593 626.9 586.7 628.3C580.5 629.7 568.7 631.5 561.7 633.3C554.8 635.1 550.6 637 545 639.2C539.4 641.4 533.8 644.1 528.3 646.7C522.8 649.3 516.3 653.1 511.7 655C507.1 656.9 502.6 657.8 500.8 658.3Z" fill="#bd5f01"/>
<path d="M505 656.7C504.6 655 501.7 650.6 502.5 646.7C503.3 642.8 505.7 637.8 510 633.3C514.3 628.8 521.6 623.7 528.3 620C535 616.3 546.4 612.5 550 611L550 611C550 612.4 550 617.8 550 619.2L550 619.2C546.7 620.7 536.3 624.4 530 628C523.7 631.6 516.2 636.2 512 641C507.8 645.8 506.2 654.1 505 656.7Z" fill="#d26a02"/>
<path d="M566.7 605L599.2 625L586.7 628.3L561.7 633.3L553 621Z" fill="url(#gScoopHi2)"/>
<path d="M519.2 670C520.7 668.6 524 664.8 528.3 661.7C532.6 658.7 539.4 654.6 545 651.7C550.6 648.8 556.2 646.3 561.7 644.2C567.2 642.1 572.8 640.6 578.3 639.2C583.8 637.8 590 636.5 595 635.8C600 635.1 605 634.7 608.3 635C611.6 635.3 613.9 637.1 615 637.5L615 637.5C617.2 639 622.5 642.7 628.3 646.7C634.1 650.7 645 657.8 650 661.7C655 665.6 656.9 668.6 658.3 670L658.3 670C655.2 670.6 646.4 672.7 640 673.5C633.6 674.3 627.5 674.5 620 675C612.5 675.5 604.7 676.2 595 676.7C585.3 677.2 571.4 678.3 561.7 678.3C552 678.3 543.1 677.5 536.7 676.7C530.3 675.9 526.2 674.4 523.3 673.3C520.4 672.2 519.9 670.5 519.2 670Z" fill="#bd5f01"/>
<path d="M525 670L593.3 660L618.3 675L561.7 678.3L536.7 676.7Z" fill="#cf6902"/>
<path d="M613 638.5L628.3 646.7L650 661.7L658.3 670L640 673.5L618.3 675L600 661.7Z" fill="url(#gScoopHi)"/>
<clipPath id="hl1c"><path d="M428.3 639.2C430 640.2 432.2 640.7 431.7 645C431.1 649.3 428.3 658.3 425 665C421.7 671.7 416.7 678.9 411.7 685C406.7 691.1 399.7 697.8 395 701.7C390.3 705.6 386.4 707.5 383.3 708.3C380.2 709.1 378.4 708.4 376.7 706.7C375 705 373.6 701.9 373.3 698.3C373 694.7 373.3 690 375 685C376.7 680 380 673.6 383.3 668.3C386.6 663 390.3 657.7 395 653.3C399.7 648.9 407.2 644.1 411.7 641.7C416.1 639.3 418.9 639.2 421.7 638.8C424.5 638.4 426.6 638.2 428.3 639.2Z"/></clipPath><clipPath id="hl2c"><path d="M550.8 730C552.9 730.8 554.3 732.2 554.2 734.2C554.1 736.2 552.4 738.5 550 741.7C547.6 744.9 543.9 749.4 540 753.3C536.1 757.2 531.2 761.4 526.7 765C522.2 768.6 517.8 772.4 513.3 775C508.8 777.6 504.4 779.5 500 780.8C495.6 782 490.3 782.6 486.7 782.5C483.1 782.4 480 781.5 478.3 780C476.6 778.5 475.9 776.3 476.7 773.3C477.5 770.2 480.5 765.5 483.3 761.7C486.1 758 489.1 754.4 493.3 750.8C497.5 747.2 503 743 508.3 740C513.6 737 519.4 734.3 525 732.5C530.6 730.7 537.4 729.6 541.7 729.2C546 728.8 548.7 729.2 550.8 730Z"/></clipPath>
<g clip-path="url(#hl1c)"><path d="M374 690 C384 665 405 645 430 640" fill="none" stroke="#c66403" stroke-width="8" filter="url(#b2)"/><path d="M381 707 C394 701 407 689 419 672" fill="none" stroke="#ffb040" stroke-width="7" filter="url(#b2)"/><path d="M386 706 C396 700 404 692 410 684" fill="none" stroke="#ffc05a" stroke-width="3.5" filter="url(#b2)"/></g>
<g clip-path="url(#hl2c)"><path d="M477 772 C492 750 520 733 552 730" fill="none" stroke="#c66403" stroke-width="8" filter="url(#b2)"/><path d="M488 782 C508 777 530 763 548 743" fill="none" stroke="#ffb040" stroke-width="6.5" filter="url(#b2)"/></g>
</g>
<g fill="none" stroke="#0c0600" stroke-width="1.15" stroke-linecap="butt" stroke-linejoin="round">
<g clip-path="url(#carclip)" stroke-dasharray="2.6 1">
<path d="M428.3 639.2C430 640.2 432.2 640.7 431.7 645C431.1 649.3 428.3 658.3 425 665C421.7 671.7 416.7 678.9 411.7 685C406.7 691.1 399.7 697.8 395 701.7C390.3 705.6 386.4 707.5 383.3 708.3C380.2 709.1 378.4 708.4 376.7 706.7C375 705 373.6 701.9 373.3 698.3C373 694.7 373.3 690 375 685C376.7 680 380 673.6 383.3 668.3C386.6 663 390.3 657.7 395 653.3C399.7 648.9 407.2 644.1 411.7 641.7C416.1 639.3 418.9 639.2 421.7 638.8C424.5 638.4 426.6 638.2 428.3 639.2Z" stroke-width="1.9" stroke-dasharray="none"/>
<path d="M550.8 730C552.9 730.8 554.3 732.2 554.2 734.2C554.1 736.2 552.4 738.5 550 741.7C547.6 744.9 543.9 749.4 540 753.3C536.1 757.2 531.2 761.4 526.7 765C522.2 768.6 517.8 772.4 513.3 775C508.8 777.6 504.4 779.5 500 780.8C495.6 782 490.3 782.6 486.7 782.5C483.1 782.4 480 781.5 478.3 780C476.6 778.5 475.9 776.3 476.7 773.3C477.5 770.2 480.5 765.5 483.3 761.7C486.1 758 489.1 754.4 493.3 750.8C497.5 747.2 503 743 508.3 740C513.6 737 519.4 734.3 525 732.5C530.6 730.7 537.4 729.6 541.7 729.2C546 728.8 548.7 729.2 550.8 730Z" stroke-width="1.9" stroke-dasharray="none"/>
<path d="M389.2 721.7C391 719.5 396.2 713.6 400 708.3C403.8 703 407 696.7 411.7 690C416.4 683.3 422.8 675.2 428.3 668.3C433.9 661.3 439.4 654.7 445 648.3C450.6 641.9 456.1 635.5 461.7 630C467.2 624.5 472.8 619.5 478.3 615C483.9 610.5 489.7 606.5 495 603.3C500.3 600.1 507.5 597 510 595.8"/>
<path d="M406.7 728.3C408.9 724.7 415.3 714.2 420 706.7C424.7 699.2 430.3 690.2 435 683.3C439.7 676.3 443.9 670.8 448.3 665C452.8 659.2 457.2 653.6 461.7 648.3C466.1 643 470.3 637.7 475 633C479.7 628.3 485.3 624.2 490 620C494.7 615.8 498.3 612.2 503.3 608C508.3 603.8 517.2 597.2 520 595"/>
<path d="M358 697C360.3 694.2 367.2 685.5 372 680C376.8 674.5 382 669 387 664C392 659 396.8 654.3 402 650C407.2 645.7 412.3 641.8 418 638C423.7 634.2 433 628.8 436 627"/>
<path d="M384 659.5C386.8 656.9 395.2 648.9 401 644C406.8 639.1 412.7 634.5 419 630C425.3 625.5 432 621 439 617C446 613 453.5 609.2 461 606C468.5 602.8 476.3 600.2 484 598C491.7 595.8 503.2 593.8 507 593" stroke-width="2.2" stroke-dasharray="none"/>
<path d="M426.7 748.3C428.1 746.1 431.9 739.7 435 735C438.1 730.3 440.6 726.1 445 720C449.4 713.9 456.1 704.7 461.7 698.3C467.2 691.9 472.8 686.6 478.3 681.7C483.9 676.9 489.4 672.9 495 669.2C500.6 665.5 506.1 662.7 511.7 659.5C517.2 656.3 522.8 652.7 528.3 650C533.8 647.3 539.4 645.2 545 643.3C550.6 641.3 556.2 639.7 561.7 638.3C567.2 636.9 572.8 636 578.3 635C583.8 634 589.4 633.2 595 632.5C600.6 631.8 606.2 631 611.7 630.8C617.2 630.5 625.5 631 628.3 631"/>
<path d="M572 590.5C574.2 592 580.3 596.2 585 599.5C589.7 602.8 592.5 604.7 600 610C607.5 615.3 620 624.2 630 631.5C640 638.8 651.2 646.9 660 653.5C668.8 660.1 675.5 665.5 683 671C690.5 676.5 697.7 682.2 705 686.7C712.3 691.2 720 695.8 726.7 698.3C733.4 700.8 742 701 745 701.5"/>
<path d="M610 615.8C615.5 619.5 632.2 629.9 643 638C653.8 646.1 666.8 657.9 675 664.2C683.2 670.5 686.7 672 692 676C697.3 680 704.5 686 707 688"/>
<path d="M457.5 763.3C460.4 760.5 469.3 751.7 475 746.7C480.7 741.7 486.1 737.5 491.7 733.3C497.2 729.1 501.4 725.6 508.3 721.7C515.2 717.8 525 713.3 533.3 710C541.6 706.7 550 703.9 558.3 701.7C566.6 699.5 575 698 583.3 696.7C591.6 695.5 600 694.6 608.3 694.2C616.6 693.8 626.9 693.9 633.3 694.2C639.7 694.5 644.5 695.5 646.7 695.8"/>
<path d="M468.3 776.7C470.2 773.9 475.8 765 480 760C484.2 755 487.2 751.4 493.3 746.7C499.4 742 508.6 736.3 516.7 731.7C524.8 727.1 533.4 722.8 541.7 719.2C550 715.6 558.4 712.6 566.7 710C575 707.4 583.4 705.1 591.7 703.3C600 701.5 607.5 700.4 616.7 699.2C625.9 698 641.7 696.8 646.7 696.3"/>
<path d="M500 796.7C502.2 794.5 508.3 789.1 513.3 783.3C518.3 777.5 523.9 768.1 530 761.7C536.1 755.3 543.9 749.7 550 745C556.1 740.3 561.2 736.9 566.7 733.3C572.2 729.7 577.8 726.3 583.3 723.3C588.8 720.2 594.4 717.5 600 715C605.6 712.5 611.2 710.4 616.7 708.3C622.2 706.2 627.8 704.3 633.3 702.5C638.8 700.7 643 698.9 650 697.5C657 696.1 665.8 695 675 694.2C684.2 693.4 695 692 705 692.5C715 693 730 696.2 735 697" stroke-width="2.1" stroke-dasharray="none"/>
<path d="M500.8 658.3C500.1 656.6 496.8 652.2 496.7 648.3C496.6 644.4 497.5 639.4 500 635C502.5 630.6 507 625.7 511.7 621.7C516.4 617.7 522.8 613.7 528.3 610.8C533.8 607.9 539.7 605.8 545 604.2C550.3 602.6 556.1 601.6 560 601.3C563.9 601 566.9 602.3 568.3 602.5L568.3 602.5C570 604 574.4 608.7 578.3 611.7C582.2 614.8 588.2 618.6 591.7 620.8C595.2 623 598 624.3 599.2 625L599.2 625C597.1 625.5 593 626.9 586.7 628.3C580.5 629.7 568.7 631.5 561.7 633.3C554.8 635.1 550.6 637 545 639.2C539.4 641.4 533.8 644.1 528.3 646.7C522.8 649.3 516.3 653.1 511.7 655C507.1 656.9 502.6 657.8 500.8 658.3Z"/>
<path d="M505 656.7C504.6 655 501.7 650.6 502.5 646.7C503.3 642.8 505.7 637.8 510 633.3C514.3 628.8 521.6 623.7 528.3 620C535 616.3 546.4 612.5 550 611"/>
<path d="M560 601.7C558.3 604.6 549.7 613.9 550 619.2C550.3 624.5 559.8 630.9 561.7 633.3"/>
<path d="M566.7 605C565.3 607.9 559.7 619.6 558.3 622.5"/>
<path d="M550 619.2C546.7 620.7 536.3 624.4 530 628C523.7 631.6 516.2 636.2 512 641C507.8 645.8 506.2 654.1 505 656.7"/>
<path d="M519.2 670C520.7 668.6 524 664.8 528.3 661.7C532.6 658.7 539.4 654.6 545 651.7C550.6 648.8 556.2 646.3 561.7 644.2C567.2 642.1 572.8 640.6 578.3 639.2C583.8 637.8 590 636.5 595 635.8C600 635.1 605 634.7 608.3 635C611.6 635.3 613.9 637.1 615 637.5L615 637.5C617.2 639 622.5 642.7 628.3 646.7C634.1 650.7 645 657.8 650 661.7C655 665.6 656.9 668.6 658.3 670L658.3 670C655.2 670.6 646.4 672.7 640 673.5C633.6 674.3 627.5 674.5 620 675C612.5 675.5 604.7 676.2 595 676.7C585.3 677.2 571.4 678.3 561.7 678.3C552 678.3 543.1 677.5 536.7 676.7C530.3 675.9 526.2 674.4 523.3 673.3C520.4 672.2 519.9 670.5 519.2 670Z"/>
<path d="M608.3 635.8C605.8 639.8 591.6 653.5 593.3 660C595 666.5 614.1 672.5 618.3 675"/>
<path d="M615 638.3C612.8 642.2 603.9 657.8 601.7 661.7"/>
<path d="M525 670C530.8 669 548.6 665.7 560 664C571.4 662.3 587.8 660.7 593.3 660"/>
<path d="M524 667C527.5 665.1 537.3 659 545 655.5C552.7 652 560.8 648.6 570 646C579.2 643.4 595 641 600 640"/>
<path d="M599 595.8L611.7 593.6L650 587.3L700 579.3L743.3 572.2L758.3 566L758.3 588.2L700 596.1L650 603L611.7 608.2L600 609.5Z"/>
<path d="M610.8 595L611.3 607.5M757.5 566.7L769.2 558.3L769.2 589.2L757.5 587.5M757.5 572L769.2 570"/>
<path d="M572.5 590.8L599 595.8"/>
<path d="M611.7 613C618.1 612.1 635.3 609.7 650 607.5C664.7 605.3 682 602.6 700 600C718 597.4 747.3 593.2 758.3 592C769.3 590.8 764.7 592.4 766 592.5"/>
<path d="M766 592.5C770 594.8 780.5 600.8 790 606.5C799.5 612.2 812.2 619.5 823.3 626.7C834.4 634 847.8 643.1 856.7 650C865.7 656.9 873.6 665 877 668"/>
<path d="M769.2 558.3C772.7 559.4 783.8 562.8 790 565C796.2 567.2 801.2 569.2 806.7 571.7C812.2 574.2 817.8 577 823.3 580C828.8 583 834.4 586.4 840 590C845.6 593.6 851.2 597.2 856.7 601.7C862.2 606.2 868.6 611.4 873.3 616.7C878 622 881.7 627.5 885 633.3C888.3 639.1 891.8 647.1 893.3 651.7C894.8 656.3 893.9 659.5 894 661"/>
<path d="M870 655C867.8 653 861.7 647.2 856.7 643.3C851.7 639.4 845.6 635.3 840 631.7C834.4 628.1 828.8 625 823.3 621.7C817.8 618.4 812.2 615 806.7 611.7C801.2 608.4 796.2 605.5 790 601.7C783.8 597.9 772.7 591.1 769.2 589"/>
<path d="M843.3 592.5L840 631"/>
<path d="M812 641.5C815 641 827 639 830 638.5"/>
<path d="M645 630C645.5 629.2 646.6 626.8 648 625.5C649.4 624.2 648.5 623.8 653.3 622.5C658.1 621.2 668.6 619 676.7 617.5C684.8 616 692.5 614.5 701.7 613.3C710.9 612 726.7 610.5 731.7 610L731.7 610C729.5 613.3 721.9 623.3 718.3 630C714.7 636.7 712.1 643.9 710 650C707.9 656.1 706.5 662.5 705.8 666.7C705.1 670.9 706 673.6 706 675L706 675C703.3 673.3 694.9 668 690 665C685.1 662 681.7 660.3 676.7 656.7C671.7 653.1 665.3 647.8 660 643.3C654.7 638.8 647.5 632.2 645 630Z"/>
<path d="M699 613.6C697.8 616 694.2 622.8 692 628C689.8 633.2 687.5 639.6 686 645C684.5 650.4 683.5 657.9 683 660.5"/>
<path d="M705 613C703.7 615.8 699.2 624.3 697 630C694.8 635.7 692.7 641.3 691.5 647C690.3 652.7 690.2 661.2 690 664"/>
<path d="M769 558.3C770.8 556.9 776.5 552.5 780 550C783.5 547.5 786.7 545.3 790 543C793.3 540.7 796.3 538.7 800 536C803.7 533.3 810 528.5 812 527"/>
<path d="M960 550.5C961.8 551.7 968.2 555.4 970.7 557.6C973.2 559.8 974.7 561.6 974.9 563.8C975.1 566 974.2 568.2 971.8 571C969.4 573.8 964 577.6 960.4 580.4C956.8 583.2 953.4 585.3 950 587.7C946.6 590.1 944.5 591.4 940 595C935.5 598.6 928.8 604.1 923.3 609.5C917.8 614.9 911.4 621.4 906.7 627.5C902 633.6 897.5 640.6 895 646C892.5 651.4 892.1 657.7 891.5 660"/>
<path d="M973.8 556.6C974.8 558.2 979.1 563.1 979.5 566C979.9 568.9 978.3 571.5 976 574.2C973.7 577 969.8 579 965.5 582.5C961.2 586 954.2 591.6 950 595C945.8 598.4 944 599.5 940 603C936 606.5 931 610.9 926 616C921 621.1 914.5 627.8 910 633.5C905.5 639.2 901.5 645.8 899 650.5C896.5 655.2 895.7 660.1 895 662"/>
<path d="M961.4 588.2C963.9 592.2 973.9 608.5 976.4 612.5"/>
<path d="M980 567C980.9 568 983.1 570.1 985.2 573.2C987.3 576.3 989 580.2 992.5 585.6C996 591 1003.8 602 1006 605.3"/>
<path d="M893.3 661.7C893.6 660.6 892.8 658.1 895 655C897.2 651.9 902 647.2 906.7 643.3C911.4 639.4 917.8 635 923.3 631.7C928.8 628.4 934.4 625.7 940 623.3C945.6 620.9 950.6 619.3 956.7 617.5C962.8 615.7 970.6 613.4 976.4 612.5C982.2 611.6 987.3 612.7 991.5 612C995.7 611.3 999.4 609.5 1001.8 608.4C1004.2 607.3 1005.3 605.8 1006 605.3" stroke-width="1.6" stroke-dasharray="none"/>
<path d="M992.5 585.6C995.4 587.8 1001.9 592.5 1010 598.5C1018.1 604.5 1036 618 1041.2 621.9"/>
<path d="M996.6 614C1000 614.4 1009.8 615.4 1016.7 616.5C1023.6 617.6 1032.7 619.2 1038 620.8C1043.3 622.4 1046 624.1 1048.4 626C1050.8 627.9 1051.5 630 1052.5 632C1053.5 634 1053.8 635.6 1054.2 638.3C1054.6 641 1055.2 644.7 1055 648.3C1054.8 651.9 1054.1 655.8 1053.3 660C1052.5 664.2 1051.7 668.3 1050 673.3C1048.3 678.3 1045.5 685 1043.3 690C1041.1 695 1038.8 699.3 1036.7 703.3C1034.6 707.3 1031.8 712.4 1030.8 714.2"/>
<path d="M889.2 695C891 693.6 895.4 690 900 686.7C904.6 683.4 911.2 678.6 916.7 675C922.2 671.4 927.8 667.8 933.3 665C938.8 662.2 944.4 660.2 950 658.3C955.6 656.3 961.2 654.7 966.7 653.3C972.2 651.9 977.8 650.8 983.3 650C988.8 649.2 994.4 648.5 1000 648.3C1005.6 648.1 1011.2 648.3 1016.7 648.7C1022.2 649.1 1027 649.6 1033.3 650.8C1039.5 652 1050.7 655 1054.2 655.8"/>
<path d="M890 663.3C891.4 664.4 897.5 666.7 898.3 670C899.1 673.3 896.5 679.1 895 683.3C893.5 687.5 891.2 690.5 889.2 695C887.2 699.5 885.1 703.9 883.3 710C881.5 716.1 880 723.4 878.3 731.7C876.6 740 874.4 749.7 873.3 760C872.2 770.3 872.1 781.8 871.7 793.3C871.3 804.8 870.9 823.2 870.8 829.2"/>
<path d="M860.8 829.2C860.7 823.2 859.9 804.8 860 793.3C860.1 781.8 860.6 771.1 861.7 760C862.8 748.9 864.5 737.8 866.7 726.7C868.9 715.6 872.2 702.8 875 693.3C877.8 683.8 881.9 673.9 883.3 670"/>
<path d="M745 700.8C746.7 702.3 751.4 706.2 755 710C758.6 713.8 763.4 718.6 766.7 723.3C770 728 772.2 732.2 775 738.3C777.8 744.4 781.1 752.2 783.3 760C785.5 767.8 787.1 775.8 788.3 785C789.5 794.2 790.1 805.5 790.5 815C790.9 824.5 790.8 837.2 790.8 841.7"/>
<path d="M745 700.8C748 702.3 758.6 706.5 763.3 710C768 713.5 770 716.7 773.3 721.7C776.6 726.7 780.2 733.1 783.3 740C786.4 746.9 789.6 755 791.7 763.3C793.8 771.6 794.8 780.5 795.8 790C796.8 799.5 797.1 811.8 797.5 820C797.9 828.2 798.2 836 798.3 839.2"/>
<path d="M745 700.8L765 696.2M850 675.8L866.7 671.5L891.7 664.2"/>
<path d="M790.8 841.7C802.5 839.6 849.1 831.3 860.8 829.2"/>
<path d="M860.8 829.2C862.6 829.5 868.5 829 871.7 830.8C874.9 832.6 877.2 835.7 880 840C882.8 844.3 885.8 851.7 888.3 856.7C890.8 861.7 893.9 867.8 895 870"/>
<path d="M790.8 841.7C789.5 843.6 785.6 848 783.3 853.3C780.9 858.6 778.8 866.6 776.7 873.3C774.6 880 771.8 890 770.8 893.3"/>
<path d="M772.5 894.2C773.8 891.3 777.4 882.7 780 876.7C782.6 870.7 785.5 862.8 788.3 858.3C791.1 853.8 795.3 851.4 796.7 850"/>
<path d="M796.7 850C807.8 848 852.2 840.2 863.3 838.3"/>
<path d="M863.3 838.3C865 838.9 870 838.9 873.3 841.7C876.6 844.5 880.1 850 883.3 855C886.5 860 891 868.9 892.5 871.7"/>
</g>
<path d="M355.8 690C356.8 688.6 357.9 686.2 361.7 681.7C365.4 677.2 372.8 669.1 378.3 663.3C383.9 657.5 389.4 651.7 395 646.7C400.6 641.7 406.1 637.6 411.7 633.3C417.2 629 422.8 624.5 428.3 620.8C433.9 617 439.4 613.7 445 610.8C450.6 607.9 456.1 605.5 461.7 603.3C467.2 601.1 472.8 599.2 478.3 597.5C483.9 595.8 489.4 594.2 495 593C500.6 591.8 506.1 590.8 511.7 590C517.2 589.2 522.8 588.6 528.3 588.3C533.8 588 539.4 587.9 545 588C550.6 588.1 556.2 588.1 561.7 588.7C567.2 589.3 572.8 590.7 578.3 591.7C583.8 592.8 591.4 594.3 595 595C598.6 595.7 599.2 595.7 600 595.8L600 595.8C602 595.4 603.4 595 611.7 593.6C620 592.2 635.3 589.7 650 587.3C664.7 584.9 684.5 581.8 700 579.3C715.5 576.8 733.8 574.3 743.3 572.2C752.8 570.1 754.5 567.5 756.7 566.5L756.7 566C759.5 563 767.8 552.9 773.3 548.3C778.8 543.7 784.4 541.8 790 538.3C795.6 534.8 801.2 530.8 806.7 527.5C812.2 524.2 817.8 521.1 823.3 518.3C828.8 515.5 834.4 513 840 510.8C845.6 508.6 851.2 506.4 856.7 505C862.2 503.6 867.8 502.8 873.3 502.5C878.8 502.2 885.5 502.4 890 503C894.5 503.6 897.2 504.6 900 505.8C902.8 507 902.8 507.1 906.7 510C910.6 512.9 917.8 519 923.3 523.3C928.8 527.6 934.4 531.9 940 535.8C945.6 539.7 951.2 543.1 956.7 546.7C962.2 550.3 969.6 555 973.3 557.5C977 560 977 559.7 979 561.8C981 563.9 982.3 567.4 985.2 570C988.1 572.6 992.1 574.3 996.6 577.3C1001.1 580.2 1007 584.1 1012.2 587.7C1017.4 591.3 1022.5 595.2 1027.7 599C1032.9 602.8 1038.1 606.7 1043.3 610.5C1048.5 614.3 1054.3 618.2 1058.8 621.9C1063.2 625.6 1065.9 628.1 1070 632.5C1074.1 636.9 1078.3 642 1083.3 648.3C1088.3 654.5 1095.3 663 1100 670C1104.7 677 1108.7 683.3 1111.7 690C1114.8 696.7 1116.8 703 1118.3 710C1119.8 717 1120.7 725.6 1121 731.7C1121.3 737.8 1121.3 742.3 1120 746.7C1118.7 751.1 1115.1 755.4 1113 758C1110.9 760.6 1111.5 760.7 1107.5 762.5C1103.5 764.3 1091.8 767.7 1088.7 768.7L1088.7 768.7C1087.2 766 1083.7 758.4 1080 752.5C1076.3 746.6 1071.7 738.4 1066.7 733.3C1061.7 728.2 1055.6 724.8 1050 721.7C1044.4 718.7 1038.8 716.4 1033.3 715C1027.8 713.6 1022.2 713.5 1016.7 713.3C1011.2 713.1 1005.6 713.1 1000 713.7C994.4 714.3 988.8 715.1 983.3 716.7C977.8 718.3 972.2 720.2 966.7 723.3C961.2 726.3 955.6 730.5 950 735C944.4 739.5 938.3 744.5 933.3 750C928.3 755.5 923.9 762.1 920 768.3C916.1 774.5 912.8 779.8 910 787C907.2 794.2 905.1 803.4 903.3 811.7C901.5 820 900.5 827 899.2 836.7C898 846.4 896.4 864.5 895.8 870L895.8 870C895.3 870.6 893.5 873.2 893 873.8L893 873.8C872.6 877.2 791.2 890.8 770.8 894.2L770.8 894.2C770.2 888.8 768.5 872.1 767.5 861.7C766.5 851.3 766.5 840.9 765 831.7C763.5 822.5 761.3 814.2 758.3 806.7C755.2 799.2 751.1 792.8 746.7 786.7C742.3 780.6 736.7 774.2 731.7 770C726.7 765.8 721.2 763.9 716.7 761.7C712.2 759.5 709.2 758 705 756.7C700.8 755.5 696.7 754.6 691.7 754.2C686.7 753.8 680.6 753.8 675 754.2C669.4 754.6 663.8 755.5 658.3 756.7C652.8 758 647.2 759.5 641.7 761.7C636.2 763.9 630.6 766.4 625 770C619.4 773.6 613.3 778.8 608.3 783.3C603.3 787.8 598.9 792.2 595 796.7C591.1 801.2 587.6 806.4 585 810C582.4 813.6 580.2 816.9 579.2 818.3L579.2 818.3C577.1 818.1 571.6 817.5 566.7 817C561.8 816.5 555.6 815.8 550 815C544.4 814.2 538.8 813.6 533.3 812.5C527.8 811.4 522.2 810.1 516.7 808.3C511.2 806.5 505 804.2 500 801.7C495 799.2 490.9 796.1 486.7 793.3C482.5 790.5 478.3 787.8 475 785C471.7 782.2 470.9 780.3 466.7 776.7C462.5 773.1 455.6 767.2 450 763.3C444.4 759.4 438.9 757.2 433.3 753.3C427.8 749.4 422.2 744.3 416.7 740C411.1 735.7 404.4 730.7 400 727.5C395.6 724.3 394.6 723.9 390 721C385.4 718.1 377.5 713.5 372.5 710C367.5 706.5 362.8 703.3 360 700C357.2 696.7 356.5 691.7 355.8 690Z M731.7 610C729.5 613.3 721.9 623.3 718.3 630C714.7 636.7 712.1 643.9 710 650C707.9 656.1 706.3 662.2 705.8 666.7C705.2 671.2 704.6 673.1 706.7 676.7C708.8 680.3 714.4 685.4 718.3 688.3C722.2 691.2 725.8 692.6 730 694C734.2 695.4 738.3 696.5 743.3 696.7C748.3 696.9 751.7 696.4 760 695C768.3 693.6 782.2 690.8 793.3 688.3C804.4 685.8 817.6 682.2 826.7 680C835.8 677.8 844.5 676.1 848 675.3L852.5 671.7C851 670.6 847.6 668.1 843.3 665C839 661.9 832.2 657.5 826.7 653.3C821.2 649.1 815.6 644.4 810 640C804.4 635.6 798.8 630.9 793.3 626.7C787.8 622.5 781.1 617.8 776.7 615C772.3 612.2 770.9 611.1 766.7 610C762.5 608.9 757.5 608.3 751.7 608.3C745.9 608.3 735 609.7 731.7 610Z" stroke-width="1.1"/>
</g>
</g>
<defs>
<linearGradient id="mFront" gradientUnits="userSpaceOnUse" x1="830" y1="300" x2="1000" y2="410"><stop offset="0" stop-color="#4d4d7c"/><stop offset="0.5" stop-color="#515182"/><stop offset="1" stop-color="#4f4f80"/></linearGradient>
<linearGradient id="mTR" gradientUnits="userSpaceOnUse" x1="934" y1="200" x2="1055" y2="295"><stop offset="0" stop-color="#62629e"/><stop offset="0.55" stop-color="#7878b8"/><stop offset="1" stop-color="#9a9adc"/></linearGradient>
<linearGradient id="mBR" gradientUnits="userSpaceOnUse" x1="1045" y1="290" x2="975" y2="385"><stop offset="0" stop-color="#a2a2e2"/><stop offset="1" stop-color="#9a9ade"/></linearGradient>
<linearGradient id="mBL" gradientUnits="userSpaceOnUse" x1="835" y1="285" x2="975" y2="385"><stop offset="0" stop-color="#6a6aaa"/><stop offset="0.6" stop-color="#8080c4"/><stop offset="1" stop-color="#9c9ce0"/></linearGradient>
<linearGradient id="mGlass" gradientUnits="userSpaceOnUse" x1="900" y1="230" x2="990" y2="360"><stop offset="0" stop-color="#e4e4e4"/><stop offset="0.5" stop-color="#d6d6d6"/><stop offset="1" stop-color="#e0e0e0"/></linearGradient>
<radialGradient id="mBump" gradientUnits="userSpaceOnUse" cx="860" cy="247" r="26"><stop offset="0" stop-color="#a8a8ec"/><stop offset="0.35" stop-color="#7a7abc"/><stop offset="1" stop-color="#55558a"/></radialGradient>
<radialGradient id="mKnob" gradientUnits="userSpaceOnUse" cx="1032" cy="368" r="28"><stop offset="0" stop-color="#a4a4e6"/><stop offset="0.4" stop-color="#7474b6"/><stop offset="1" stop-color="#505084"/></radialGradient>
<filter id="mb2" x="-50%" y="-50%" width="200%" height="200%"><feGaussianBlur stdDeviation="1.5"/></filter>
</defs>
<g id="mirror" stroke-linejoin="round">
<path d="M849 262C848.9 261 848 258.3 848.5 256C849 253.7 849.5 251.1 851.7 248C853.9 244.9 857.8 240.5 861.7 237.7C865.6 234.9 871.1 232.3 875 231C878.9 229.7 882.7 229.4 885 229.7C887.3 229.9 888.3 232 889 232.5L889 232.5C882.5 237.8 856.5 258.8 850 264Z" fill="url(#mBump)" stroke="#10101e" stroke-width="0.8"/>
<path d="M1055 298L1051.7 305L1050 323.3L1046 345L1040 352L1020 372L1002.5 393.3L975 391.7Z" fill="#5c5c94" stroke="#10101e" stroke-width="0.9"/>
<path d="M1034 318L1050 323.3L1046 345L1040 351Z" fill="#6666a2" stroke="#10101e" stroke-width="0.8"/>
<path d="M1002.5 380C1002.5 382.2 1002.5 391.1 1002.5 393.3L1002.5 393.3C1005.4 393.3 1012.1 394.1 1020 393.3C1027.9 392.5 1043.9 390 1050 388.3C1056.1 386.6 1055.6 384.1 1056.7 383.3L1056.7 383.3C1052.2 381.9 1038.1 376.2 1030 375C1021.9 373.8 1011.7 375.8 1008 376Z" fill="#50507f" stroke="#10101e" stroke-width="0.9"/>
<path d="M1040 350C1042.7 350 1045.8 350 1048.3 351.7C1050.8 353.4 1053.4 356.4 1055 360C1056.6 363.6 1057.7 369.4 1058 373.3C1058.3 377.2 1058 380.8 1056.7 383.3C1055.4 385.8 1053.6 387 1050 388.3C1046.4 389.6 1040 390.9 1035 391C1030 391.1 1024.2 390.3 1020 389C1015.8 387.7 1012 385.2 1010 383C1008 380.8 1007.7 378.8 1008 376C1008.3 373.2 1009.7 369.2 1012 366C1014.3 362.8 1018.7 359.4 1022 357C1025.3 354.6 1029 352.7 1032 351.5C1035 350.3 1037.3 350 1040 350Z" fill="url(#mKnob)" stroke="#10101e" stroke-width="0.9"/>
<path d="M1012 380C1015 379.8 1024.5 379.7 1030 379C1035.5 378.3 1040.5 377.2 1045 376C1049.5 374.8 1055 372.7 1057 372" fill="none" stroke="#10101e" stroke-width="0.8"/>
<path d="M1040 350C1040 347.6 1045.8 350 1048.3 351.7C1050.8 353.4 1053.4 356.4 1055 360C1056.6 363.6 1057.7 369.4 1058 373.3C1058.3 377.2 1057.7 382.5 1056.7 383.3C1055.7 384.1 1053.5 380.9 1052 378C1050.5 375.1 1050 370.7 1048 366C1046 361.3 1040 352.4 1040 350Z" fill="#55558a" stroke="#10101e" stroke-width="0.8"/>
<path d="M975 391.7L994 366L1012 377L1003 394Z" fill="#4f4f80"/>
<path d="M828.3 284.3C828.4 289.3 829.1 309.2 829.2 314.2L829.2 314.2C831.5 316.7 838.1 323.9 843 329C847.9 334.1 851.6 338.7 858.3 345C865 351.3 873.6 358.6 883.3 366.7C893 374.8 905.6 385.8 916.7 393.3C927.8 400.8 941.1 407.2 950 411.7C958.9 416.1 965 418.5 970 420C975 421.5 975.5 421.2 980 420.8C984.5 420.4 993.1 419 996.7 417.5C1000.3 416 1000.9 412.7 1001.7 411.7L1001.7 411.7C1001.8 408.6 1002.4 396.4 1002.5 393.3L1002.5 393.3C997.9 393 979.6 392 975 391.7Z" fill="url(#mFront)" stroke="#10101e" stroke-width="1"/>
<path d="M832 318C836.7 322.7 848.7 335.7 860 346C871.3 356.3 885 369.3 900 380C915 390.7 937.5 403.5 950 410C962.5 416.5 970.8 417.5 975 419" fill="none" stroke="#454572" stroke-width="3" filter="url(#mb2)" opacity="0.7"/>
<path d="M829 291Q898.5 349.5 975 399.5L1002 401" fill="none" stroke="#10101e" stroke-width="0.9"/>
<path d="M975 399.5L976 420.5" fill="none" stroke="#3c3c66" stroke-width="0.8" opacity="0.6"/>
<path d="M934.2 196.3 Q999.6 241.2 1058.3 294.5 L1030.8 286 Q982.2 246.6 928.3 214 L924.2 211.1 Z" fill="url(#mTR)" stroke="#6a6aa8" stroke-width="0.8"/>
<path d="M1058.3 294.5L975 391.7L975 365.8L1030.8 286Z" fill="url(#mBR)" stroke="#9e9ee0" stroke-width="0.8"/>
<path d="M975 391.7 Q898.6 342 828.3 284.3 L842.9 278.6 L856.7 287.7 Q913.4 330.3 975 365.8 Z" fill="url(#mBL)" stroke="#7c7cbe" stroke-width="0.8"/>
<path d="M828.3 284.3L934.2 196.3L924.2 211.1L842.9 278.6Z" fill="#64649f" stroke="#64649f" stroke-width="0.8"/>
<path d="M928.3 214 Q982.2 246.6 1027.7 283.5 Q1030.8 286 1028.5 289.3 L977.9 361.7 Q975 365.8 970.7 363.3 Q913.4 330.3 856.7 287.7 Z" fill="url(#mGlass)"/>
<path d="M924.2 211.1L928.3 214L921 232L910 252L900 272.7L895.8 281.8L880 284.5L863.3 286.8L856.7 287.7L842.9 278.6Z" fill="#56567e" stroke="#10101e" stroke-width="0.8"/>
<path d="M850 272.7L875 266L900 264.3L900 272.7L895.8 281.8L880 284.5L863.3 286.8L856.7 287.7L842.9 278.6Z" fill="#6e6ea6" stroke="#10101e" stroke-width="0.7"/>
<path d="M854 277L898 270.5M858 282L897 276.5M872 277.5L873 285.3M880 271L880.5 275.5M921 232L907 236L900.5 264" fill="none" stroke="#10101e" stroke-width="0.7"/>
<g fill="none" stroke="#10101e" stroke-width="0.9">
<path d="M934.2 196.3 Q999.6 241.2 1058.3 294.5 L975 391.7 Q898.6 342 828.3 284.3 Z"/>
<path d="M928.3 214 Q982.2 246.6 1027.7 283.5 Q1030.8 286 1028.5 289.3 L977.9 361.7 Q975 365.8 970.7 363.3 Q913.4 330.3 856.7 287.7"/>
<path d="M928.3 214 L924.2 211.1 L842.9 278.6 M842.9 278.6 L856.7 287.7"/>
<path d="M932.5 198.3L836 281.5M1053 297L978 386.5M1049 289L975 376.5" stroke-dasharray="2.6 1"/>
</g>
</g>
<defs><filter id="cb6" x="-50%" y="-50%" width="200%" height="200%"><feGaussianBlur stdDeviation="5"/></filter>
<linearGradient id="cgF" x1="0" y1="0" x2="0" y2="1"><stop offset="0" stop-color="#ebebeb"/><stop offset="1" stop-color="#dadada"/></linearGradient>
<linearGradient id="cgL" x1="0" y1="0" x2="0" y2="1"><stop offset="0" stop-color="#e4e4e4"/><stop offset="1" stop-color="#d2d2d2"/></linearGradient></defs>
<g id="viewcube">
<path d="M1731 266L1753 291L1801 277L1808 264L1780 258Z" fill="#7c7c7c" filter="url(#cb6)" opacity="0.8"/>
<path d="M1733.6 221.7L1774.6 216.7L1800.1 227.9L1752.9 234.2Z" fill="#ececec"/>
<path d="M1733.6 221.7L1752.9 234.2L1754.1 283.9L1734.8 264.6Z" fill="url(#cgL)"/>
<path d="M1752.9 234.2L1800.1 227.9L1798.3 270.8L1754.1 283.9Z" fill="url(#cgF)"/>
<g fill="none" stroke="#b4b8c0" stroke-width="1.8" stroke-dasharray="9 5" stroke-linecap="butt">
<path d="M1733.6 221.7L1774.6 216.7L1800.1 227.9L1752.9 234.2Z"/><path d="M1733.6 221.7L1752.9 234.2L1754.1 283.9L1734.8 264.6Z"/><path d="M1800.1 227.9L1798.3 270.8L1754.1 283.9"/>
</g>
<clipPath id="cLf"><path d="M1733.6 221.7L1752.9 234.2L1754.1 283.9L1734.8 264.6Z"/></clipPath>
<text transform="translate(1776.6 262.6) skewY(-8) scale(0.74 1)" font-family="'Liberation Sans',sans-serif" font-size="14" font-weight="bold" fill="#a2a6ae" text-anchor="middle" letter-spacing="0.4">AVANT</text>
<g clip-path="url(#cLf)"><text transform="translate(1742.6 255.5) skewY(42) scale(0.47 1)" font-family="'Liberation Sans',sans-serif" font-size="13.5" font-weight="bold" fill="#a4a8b0" text-anchor="middle">GAUCHE</text></g>
<text transform="translate(1766 229.8) rotate(-6) scale(1 0.42) skewX(-50)" font-family="'Liberation Sans',sans-serif" font-size="10" font-weight="bold" fill="#c2c5ca" text-anchor="middle">HAUT</text>
</g>
<g id="axes">
<path d="M58.6 907.1L32.5 891.3M58.6 907.1L106 901" fill="none" stroke="#1a62b4" stroke-width="1.3"/>
<path d="M31.5 890.6L44.6 891.2L39.5 900.3Z M32.5 891.3L42 895.7" fill="none" stroke="#1a62b4" stroke-width="1.1"/>
<path d="M107.8 900.6L91.2 896.8L92.6 907.6Z M106 901L92 902.2" fill="none" stroke="#1a62b4" stroke-width="1.1"/>
<path d="M107.8 900.6L97 899.5L98 905Z" fill="#1a62b4"/>
<path d="M58.7 907.3L59.8 868" stroke="#fff" stroke-width="2.6"/>
<path d="M60.1 854.3L54.8 871.2C57 873 63.5 873 65.6 871.2Z" fill="none" stroke="#fff" stroke-width="1.1"/><path d="M60.1 854.3L59.8 872M57 867.5C58.5 869 62 869 63.3 867.5" fill="none" stroke="#fff" stroke-width="1"/>
<text x="65.5" y="847.8" font-family="'Liberation Sans',sans-serif" font-size="19" fill="#ffffff">Z</text>
<text x="115.2" y="893.6" textLength="9.8" lengthAdjust="spacingAndGlyphs" font-family="'Liberation Sans',sans-serif" font-size="19" fill="#1a62b4" stroke="#1a62b4" stroke-width="0.4">X</text>
<text x="39" y="884.6" textLength="9.8" lengthAdjust="spacingAndGlyphs" font-family="'Liberation Sans',sans-serif" font-size="19" fill="#1a62b4" stroke="#1a62b4" stroke-width="0.4">Y</text>
</g>
<rect x="0" y="181" width="1" height="784" fill="#fff" opacity="0.13"/>
</svg>
</div>
</body></html>
